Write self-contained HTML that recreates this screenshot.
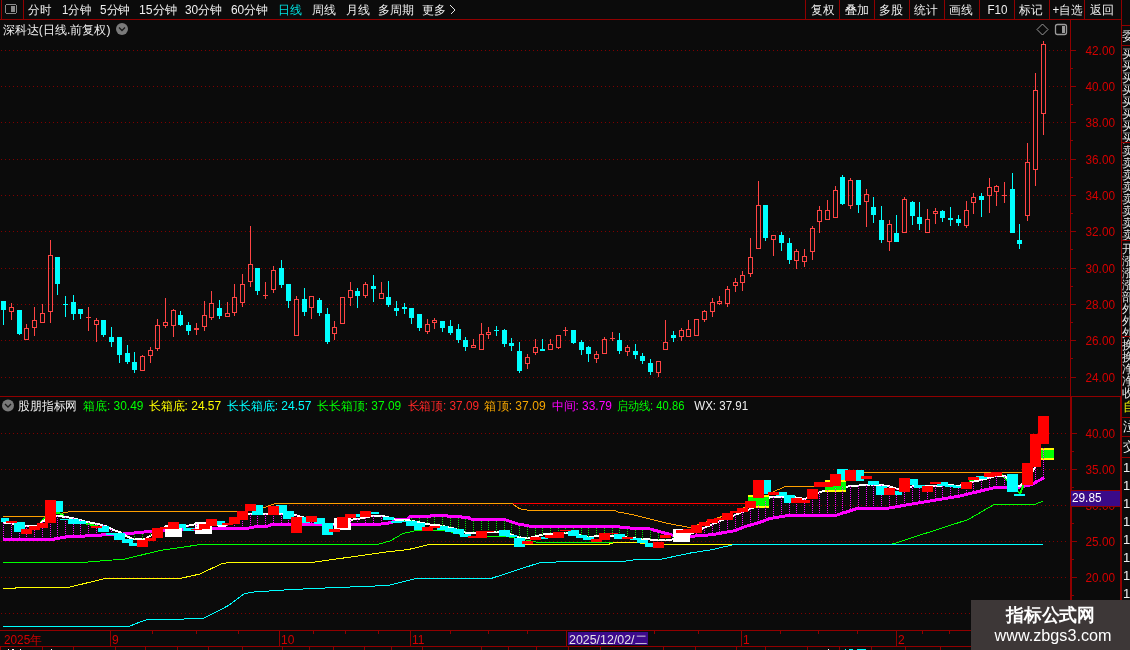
<!DOCTYPE html>
<html><head><meta charset="utf-8"><style>
html,body{margin:0;padding:0;background:#0b0b0b;width:1130px;height:650px;overflow:hidden}
svg{display:block;position:absolute;left:0;top:0;will-change:transform}
</style></head><body>
<svg width="1130" height="650" viewBox="0 0 1130 650" shape-rendering="crispEdges">
<rect x="0" y="0" width="1130" height="650" fill="#0b0b0b"/>
<path d="M1 50.5H1068" stroke="#800000" stroke-width="1" stroke-dasharray="1 3"/><path d="M1 86.5H1068" stroke="#800000" stroke-width="1" stroke-dasharray="1 3"/><path d="M1 122.5H1068" stroke="#800000" stroke-width="1" stroke-dasharray="1 3"/><path d="M1 159.5H1068" stroke="#800000" stroke-width="1" stroke-dasharray="1 3"/><path d="M1 195.5H1068" stroke="#800000" stroke-width="1" stroke-dasharray="1 3"/><path d="M1 231.5H1068" stroke="#800000" stroke-width="1" stroke-dasharray="1 3"/><path d="M1 268.5H1068" stroke="#800000" stroke-width="1" stroke-dasharray="1 3"/><path d="M1 304.5H1068" stroke="#800000" stroke-width="1" stroke-dasharray="1 3"/><path d="M1 340.5H1068" stroke="#800000" stroke-width="1" stroke-dasharray="1 3"/><path d="M1 377.5H1068" stroke="#800000" stroke-width="1" stroke-dasharray="1 3"/><path d="M1 433.5H1068" stroke="#800000" stroke-width="1" stroke-dasharray="1 3"/><path d="M1 469.5H1068" stroke="#800000" stroke-width="1" stroke-dasharray="1 3"/><path d="M1 505.5H1068" stroke="#800000" stroke-width="1" stroke-dasharray="1 3"/><path d="M1 541.5H1068" stroke="#800000" stroke-width="1" stroke-dasharray="1 3"/><path d="M1 577.5H1068" stroke="#800000" stroke-width="1" stroke-dasharray="1 3"/><path d="M1 613.5H1068" stroke="#800000" stroke-width="1" stroke-dasharray="1 3"/>
<rect x="3" y="310" width="1" height="15" fill="#00ffff"/><rect x="1" y="301" width="5" height="9" fill="#00ffff"/><rect x="11" y="303" width="1" height="4" fill="#ff4444"/><rect x="11" y="312" width="1" height="8" fill="#ff4444"/><rect x="9" y="307" width="5" height="1" fill="#ff4444"/><rect x="9" y="311" width="5" height="1" fill="#ff4444"/><rect x="9" y="307" width="1" height="5" fill="#ff4444"/><rect x="13" y="307" width="1" height="5" fill="#ff4444"/><rect x="19" y="334" width="1" height="1" fill="#00ffff"/><rect x="17" y="310" width="5" height="24" fill="#00ffff"/><rect x="26" y="324" width="1" height="4" fill="#ff4444"/><rect x="24" y="328" width="5" height="1" fill="#ff4444"/><rect x="24" y="339" width="5" height="1" fill="#ff4444"/><rect x="24" y="328" width="1" height="12" fill="#ff4444"/><rect x="28" y="328" width="1" height="12" fill="#ff4444"/><rect x="34" y="307" width="1" height="13" fill="#ff4444"/><rect x="34" y="328" width="1" height="8" fill="#ff4444"/><rect x="32" y="320" width="5" height="1" fill="#ff4444"/><rect x="32" y="327" width="5" height="1" fill="#ff4444"/><rect x="32" y="320" width="1" height="8" fill="#ff4444"/><rect x="36" y="320" width="1" height="8" fill="#ff4444"/><rect x="42" y="304" width="1" height="9" fill="#ff4444"/><rect x="40" y="313" width="5" height="1" fill="#ff4444"/><rect x="40" y="322" width="5" height="1" fill="#ff4444"/><rect x="40" y="313" width="1" height="10" fill="#ff4444"/><rect x="44" y="313" width="1" height="10" fill="#ff4444"/><rect x="50" y="240" width="1" height="15" fill="#ff4444"/><rect x="50" y="312" width="1" height="11" fill="#ff4444"/><rect x="48" y="255" width="5" height="1" fill="#ff4444"/><rect x="48" y="311" width="5" height="1" fill="#ff4444"/><rect x="48" y="255" width="1" height="57" fill="#ff4444"/><rect x="52" y="255" width="1" height="57" fill="#ff4444"/><rect x="57" y="284" width="1" height="11" fill="#00ffff"/><rect x="55" y="257" width="5" height="27" fill="#00ffff"/><rect x="65" y="296" width="1" height="8" fill="#00ffff"/><rect x="65" y="305" width="1" height="12" fill="#00ffff"/><rect x="63" y="304" width="5" height="1" fill="#00ffff"/><rect x="73" y="295" width="1" height="7" fill="#00ffff"/><rect x="73" y="314" width="1" height="6" fill="#00ffff"/><rect x="71" y="302" width="5" height="12" fill="#00ffff"/><rect x="80" y="314" width="1" height="5" fill="#00ffff"/><rect x="78" y="309" width="5" height="5" fill="#00ffff"/><rect x="88" y="307" width="1" height="10" fill="#ff4444"/><rect x="88" y="318" width="1" height="13" fill="#ff4444"/><rect x="86" y="317" width="5" height="1" fill="#ff4444"/><rect x="96" y="318" width="1" height="2" fill="#ff4444"/><rect x="96" y="325" width="1" height="17" fill="#ff4444"/><rect x="94" y="320" width="5" height="1" fill="#ff4444"/><rect x="94" y="324" width="5" height="1" fill="#ff4444"/><rect x="94" y="320" width="1" height="5" fill="#ff4444"/><rect x="98" y="320" width="1" height="5" fill="#ff4444"/><rect x="103" y="335" width="1" height="2" fill="#00ffff"/><rect x="101" y="320" width="5" height="15" fill="#00ffff"/><rect x="111" y="327" width="1" height="10" fill="#00ffff"/><rect x="111" y="342" width="1" height="5" fill="#00ffff"/><rect x="109" y="337" width="5" height="5" fill="#00ffff"/><rect x="119" y="355" width="1" height="8" fill="#00ffff"/><rect x="117" y="337" width="5" height="18" fill="#00ffff"/><rect x="127" y="345" width="1" height="8" fill="#00ffff"/><rect x="127" y="362" width="1" height="2" fill="#00ffff"/><rect x="125" y="353" width="5" height="9" fill="#00ffff"/><rect x="134" y="352" width="1" height="10" fill="#00ffff"/><rect x="134" y="370" width="1" height="3" fill="#00ffff"/><rect x="132" y="362" width="5" height="8" fill="#00ffff"/><rect x="142" y="355" width="1" height="1" fill="#ff4444"/><rect x="140" y="356" width="5" height="1" fill="#ff4444"/><rect x="140" y="370" width="5" height="1" fill="#ff4444"/><rect x="140" y="356" width="1" height="15" fill="#ff4444"/><rect x="144" y="356" width="1" height="15" fill="#ff4444"/><rect x="150" y="347" width="1" height="3" fill="#ff4444"/><rect x="150" y="356" width="1" height="7" fill="#ff4444"/><rect x="148" y="350" width="5" height="1" fill="#ff4444"/><rect x="148" y="355" width="5" height="1" fill="#ff4444"/><rect x="148" y="350" width="1" height="6" fill="#ff4444"/><rect x="152" y="350" width="1" height="6" fill="#ff4444"/><rect x="157" y="319" width="1" height="6" fill="#ff4444"/><rect x="157" y="349" width="1" height="2" fill="#ff4444"/><rect x="155" y="325" width="5" height="1" fill="#ff4444"/><rect x="155" y="348" width="5" height="1" fill="#ff4444"/><rect x="155" y="325" width="1" height="24" fill="#ff4444"/><rect x="159" y="325" width="1" height="24" fill="#ff4444"/><rect x="165" y="298" width="1" height="24" fill="#ff4444"/><rect x="165" y="326" width="1" height="2" fill="#ff4444"/><rect x="163" y="322" width="5" height="1" fill="#ff4444"/><rect x="163" y="325" width="5" height="1" fill="#ff4444"/><rect x="163" y="322" width="1" height="4" fill="#ff4444"/><rect x="167" y="322" width="1" height="4" fill="#ff4444"/><rect x="173" y="309" width="1" height="1" fill="#ff4444"/><rect x="173" y="326" width="1" height="11" fill="#ff4444"/><rect x="171" y="310" width="5" height="1" fill="#ff4444"/><rect x="171" y="325" width="5" height="1" fill="#ff4444"/><rect x="171" y="310" width="1" height="16" fill="#ff4444"/><rect x="175" y="310" width="1" height="16" fill="#ff4444"/><rect x="180" y="311" width="1" height="4" fill="#00ffff"/><rect x="180" y="325" width="1" height="1" fill="#00ffff"/><rect x="178" y="315" width="5" height="10" fill="#00ffff"/><rect x="188" y="322" width="1" height="3" fill="#00ffff"/><rect x="188" y="331" width="1" height="4" fill="#00ffff"/><rect x="186" y="325" width="5" height="6" fill="#00ffff"/><rect x="196" y="323" width="1" height="5" fill="#ff4444"/><rect x="196" y="330" width="1" height="5" fill="#ff4444"/><rect x="194" y="328" width="5" height="1" fill="#ff4444"/><rect x="194" y="329" width="5" height="1" fill="#ff4444"/><rect x="194" y="328" width="1" height="2" fill="#ff4444"/><rect x="198" y="328" width="1" height="2" fill="#ff4444"/><rect x="204" y="301" width="1" height="14" fill="#ff4444"/><rect x="204" y="327" width="1" height="4" fill="#ff4444"/><rect x="202" y="315" width="5" height="1" fill="#ff4444"/><rect x="202" y="326" width="5" height="1" fill="#ff4444"/><rect x="202" y="315" width="1" height="12" fill="#ff4444"/><rect x="206" y="315" width="1" height="12" fill="#ff4444"/><rect x="211" y="291" width="1" height="12" fill="#ff4444"/><rect x="211" y="318" width="1" height="2" fill="#ff4444"/><rect x="209" y="303" width="5" height="1" fill="#ff4444"/><rect x="209" y="317" width="5" height="1" fill="#ff4444"/><rect x="209" y="303" width="1" height="15" fill="#ff4444"/><rect x="213" y="303" width="1" height="15" fill="#ff4444"/><rect x="219" y="300" width="1" height="8" fill="#00ffff"/><rect x="219" y="316" width="1" height="3" fill="#00ffff"/><rect x="217" y="308" width="5" height="8" fill="#00ffff"/><rect x="227" y="302" width="1" height="11" fill="#ff4444"/><rect x="225" y="313" width="5" height="1" fill="#ff4444"/><rect x="225" y="316" width="5" height="1" fill="#ff4444"/><rect x="225" y="313" width="1" height="4" fill="#ff4444"/><rect x="229" y="313" width="1" height="4" fill="#ff4444"/><rect x="234" y="284" width="1" height="13" fill="#ff4444"/><rect x="234" y="313" width="1" height="3" fill="#ff4444"/><rect x="232" y="297" width="5" height="1" fill="#ff4444"/><rect x="232" y="312" width="5" height="1" fill="#ff4444"/><rect x="232" y="297" width="1" height="16" fill="#ff4444"/><rect x="236" y="297" width="1" height="16" fill="#ff4444"/><rect x="242" y="274" width="1" height="10" fill="#ff4444"/><rect x="242" y="303" width="1" height="4" fill="#ff4444"/><rect x="240" y="284" width="5" height="1" fill="#ff4444"/><rect x="240" y="302" width="5" height="1" fill="#ff4444"/><rect x="240" y="284" width="1" height="19" fill="#ff4444"/><rect x="244" y="284" width="1" height="19" fill="#ff4444"/><rect x="250" y="226" width="1" height="38" fill="#ff4444"/><rect x="250" y="282" width="1" height="5" fill="#ff4444"/><rect x="248" y="264" width="5" height="1" fill="#ff4444"/><rect x="248" y="281" width="5" height="1" fill="#ff4444"/><rect x="248" y="264" width="1" height="18" fill="#ff4444"/><rect x="252" y="264" width="1" height="18" fill="#ff4444"/><rect x="257" y="291" width="1" height="4" fill="#00ffff"/><rect x="255" y="268" width="5" height="23" fill="#00ffff"/><rect x="265" y="282" width="1" height="13" fill="#ff4444"/><rect x="265" y="296" width="1" height="3" fill="#ff4444"/><rect x="263" y="295" width="5" height="1" fill="#ff4444"/><rect x="273" y="266" width="1" height="4" fill="#ff4444"/><rect x="273" y="290" width="1" height="3" fill="#ff4444"/><rect x="271" y="270" width="5" height="1" fill="#ff4444"/><rect x="271" y="289" width="5" height="1" fill="#ff4444"/><rect x="271" y="270" width="1" height="20" fill="#ff4444"/><rect x="275" y="270" width="1" height="20" fill="#ff4444"/><rect x="281" y="260" width="1" height="8" fill="#00ffff"/><rect x="281" y="285" width="1" height="3" fill="#00ffff"/><rect x="279" y="268" width="5" height="17" fill="#00ffff"/><rect x="288" y="301" width="1" height="7" fill="#00ffff"/><rect x="286" y="284" width="5" height="17" fill="#00ffff"/><rect x="296" y="296" width="1" height="3" fill="#ff4444"/><rect x="294" y="299" width="5" height="1" fill="#ff4444"/><rect x="294" y="335" width="5" height="1" fill="#ff4444"/><rect x="294" y="299" width="1" height="37" fill="#ff4444"/><rect x="298" y="299" width="1" height="37" fill="#ff4444"/><rect x="304" y="288" width="1" height="11" fill="#00ffff"/><rect x="304" y="312" width="1" height="4" fill="#00ffff"/><rect x="302" y="299" width="5" height="13" fill="#00ffff"/><rect x="311" y="308" width="1" height="11" fill="#ff4444"/><rect x="309" y="296" width="5" height="1" fill="#ff4444"/><rect x="309" y="307" width="5" height="1" fill="#ff4444"/><rect x="309" y="296" width="1" height="12" fill="#ff4444"/><rect x="313" y="296" width="1" height="12" fill="#ff4444"/><rect x="319" y="298" width="1" height="2" fill="#00ffff"/><rect x="319" y="313" width="1" height="3" fill="#00ffff"/><rect x="317" y="300" width="5" height="13" fill="#00ffff"/><rect x="327" y="308" width="1" height="6" fill="#00ffff"/><rect x="327" y="342" width="1" height="2" fill="#00ffff"/><rect x="325" y="314" width="5" height="28" fill="#00ffff"/><rect x="334" y="321" width="1" height="6" fill="#ff4444"/><rect x="334" y="334" width="1" height="6" fill="#ff4444"/><rect x="332" y="327" width="5" height="1" fill="#ff4444"/><rect x="332" y="333" width="5" height="1" fill="#ff4444"/><rect x="332" y="327" width="1" height="7" fill="#ff4444"/><rect x="336" y="327" width="1" height="7" fill="#ff4444"/><rect x="340" y="297" width="5" height="1" fill="#ff4444"/><rect x="340" y="323" width="5" height="1" fill="#ff4444"/><rect x="340" y="297" width="1" height="27" fill="#ff4444"/><rect x="344" y="297" width="1" height="27" fill="#ff4444"/><rect x="350" y="282" width="1" height="8" fill="#ff4444"/><rect x="350" y="298" width="1" height="8" fill="#ff4444"/><rect x="348" y="290" width="5" height="1" fill="#ff4444"/><rect x="348" y="297" width="5" height="1" fill="#ff4444"/><rect x="348" y="290" width="1" height="8" fill="#ff4444"/><rect x="352" y="290" width="1" height="8" fill="#ff4444"/><rect x="357" y="288" width="1" height="3" fill="#00ffff"/><rect x="357" y="296" width="1" height="12" fill="#00ffff"/><rect x="355" y="291" width="5" height="5" fill="#00ffff"/><rect x="365" y="282" width="1" height="2" fill="#ff4444"/><rect x="365" y="296" width="1" height="2" fill="#ff4444"/><rect x="363" y="284" width="5" height="1" fill="#ff4444"/><rect x="363" y="295" width="5" height="1" fill="#ff4444"/><rect x="363" y="284" width="1" height="12" fill="#ff4444"/><rect x="367" y="284" width="1" height="12" fill="#ff4444"/><rect x="373" y="275" width="1" height="11" fill="#00ffff"/><rect x="373" y="289" width="1" height="13" fill="#00ffff"/><rect x="371" y="286" width="5" height="3" fill="#00ffff"/><rect x="381" y="282" width="1" height="11" fill="#ff4444"/><rect x="379" y="293" width="5" height="1" fill="#ff4444"/><rect x="379" y="298" width="5" height="1" fill="#ff4444"/><rect x="379" y="293" width="1" height="6" fill="#ff4444"/><rect x="383" y="293" width="1" height="6" fill="#ff4444"/><rect x="388" y="281" width="1" height="16" fill="#00ffff"/><rect x="388" y="305" width="1" height="2" fill="#00ffff"/><rect x="386" y="297" width="5" height="8" fill="#00ffff"/><rect x="396" y="301" width="1" height="7" fill="#00ffff"/><rect x="396" y="311" width="1" height="5" fill="#00ffff"/><rect x="394" y="308" width="5" height="3" fill="#00ffff"/><rect x="404" y="303" width="1" height="4" fill="#00ffff"/><rect x="404" y="309" width="1" height="5" fill="#00ffff"/><rect x="402" y="307" width="5" height="2" fill="#00ffff"/><rect x="411" y="318" width="1" height="6" fill="#00ffff"/><rect x="409" y="308" width="5" height="10" fill="#00ffff"/><rect x="419" y="328" width="1" height="3" fill="#00ffff"/><rect x="417" y="314" width="5" height="14" fill="#00ffff"/><rect x="427" y="319" width="1" height="5" fill="#ff4444"/><rect x="427" y="332" width="1" height="2" fill="#ff4444"/><rect x="425" y="324" width="5" height="1" fill="#ff4444"/><rect x="425" y="331" width="5" height="1" fill="#ff4444"/><rect x="425" y="324" width="1" height="8" fill="#ff4444"/><rect x="429" y="324" width="1" height="8" fill="#ff4444"/><rect x="434" y="318" width="1" height="2" fill="#ff4444"/><rect x="434" y="323" width="1" height="6" fill="#ff4444"/><rect x="432" y="320" width="5" height="1" fill="#ff4444"/><rect x="432" y="322" width="5" height="1" fill="#ff4444"/><rect x="432" y="320" width="1" height="3" fill="#ff4444"/><rect x="436" y="320" width="1" height="3" fill="#ff4444"/><rect x="442" y="328" width="1" height="4" fill="#00ffff"/><rect x="440" y="321" width="5" height="7" fill="#00ffff"/><rect x="450" y="320" width="1" height="6" fill="#00ffff"/><rect x="450" y="333" width="1" height="2" fill="#00ffff"/><rect x="448" y="326" width="5" height="7" fill="#00ffff"/><rect x="458" y="324" width="1" height="5" fill="#00ffff"/><rect x="458" y="340" width="1" height="3" fill="#00ffff"/><rect x="456" y="329" width="5" height="11" fill="#00ffff"/><rect x="465" y="337" width="1" height="3" fill="#00ffff"/><rect x="465" y="347" width="1" height="4" fill="#00ffff"/><rect x="463" y="340" width="5" height="7" fill="#00ffff"/><rect x="473" y="339" width="1" height="6" fill="#ff4444"/><rect x="471" y="345" width="5" height="1" fill="#ff4444"/><rect x="471" y="347" width="5" height="1" fill="#ff4444"/><rect x="471" y="345" width="1" height="3" fill="#ff4444"/><rect x="475" y="345" width="1" height="3" fill="#ff4444"/><rect x="481" y="323" width="1" height="11" fill="#ff4444"/><rect x="479" y="334" width="5" height="1" fill="#ff4444"/><rect x="479" y="349" width="5" height="1" fill="#ff4444"/><rect x="479" y="334" width="1" height="16" fill="#ff4444"/><rect x="483" y="334" width="1" height="16" fill="#ff4444"/><rect x="488" y="327" width="1" height="5" fill="#ff4444"/><rect x="488" y="335" width="1" height="4" fill="#ff4444"/><rect x="486" y="332" width="5" height="1" fill="#ff4444"/><rect x="486" y="334" width="5" height="1" fill="#ff4444"/><rect x="486" y="332" width="1" height="3" fill="#ff4444"/><rect x="490" y="332" width="1" height="3" fill="#ff4444"/><rect x="496" y="326" width="1" height="4" fill="#00ffff"/><rect x="496" y="331" width="1" height="5" fill="#00ffff"/><rect x="494" y="330" width="5" height="1" fill="#00ffff"/><rect x="504" y="329" width="1" height="1" fill="#00ffff"/><rect x="504" y="344" width="1" height="3" fill="#00ffff"/><rect x="502" y="330" width="5" height="14" fill="#00ffff"/><rect x="511" y="338" width="1" height="5" fill="#00ffff"/><rect x="511" y="346" width="1" height="5" fill="#00ffff"/><rect x="509" y="343" width="5" height="3" fill="#00ffff"/><rect x="519" y="342" width="1" height="9" fill="#00ffff"/><rect x="519" y="371" width="1" height="2" fill="#00ffff"/><rect x="517" y="351" width="5" height="20" fill="#00ffff"/><rect x="527" y="354" width="1" height="3" fill="#ff4444"/><rect x="527" y="364" width="1" height="5" fill="#ff4444"/><rect x="525" y="357" width="5" height="1" fill="#ff4444"/><rect x="525" y="363" width="5" height="1" fill="#ff4444"/><rect x="525" y="357" width="1" height="7" fill="#ff4444"/><rect x="529" y="357" width="1" height="7" fill="#ff4444"/><rect x="535" y="339" width="1" height="8" fill="#ff4444"/><rect x="535" y="353" width="1" height="2" fill="#ff4444"/><rect x="533" y="347" width="5" height="1" fill="#ff4444"/><rect x="533" y="352" width="5" height="1" fill="#ff4444"/><rect x="533" y="347" width="1" height="6" fill="#ff4444"/><rect x="537" y="347" width="1" height="6" fill="#ff4444"/><rect x="542" y="339" width="1" height="10" fill="#00ffff"/><rect x="540" y="349" width="5" height="2" fill="#00ffff"/><rect x="550" y="339" width="1" height="5" fill="#ff4444"/><rect x="548" y="344" width="5" height="1" fill="#ff4444"/><rect x="548" y="349" width="5" height="1" fill="#ff4444"/><rect x="548" y="344" width="1" height="6" fill="#ff4444"/><rect x="552" y="344" width="1" height="6" fill="#ff4444"/><rect x="558" y="348" width="1" height="1" fill="#ff4444"/><rect x="556" y="335" width="5" height="1" fill="#ff4444"/><rect x="556" y="347" width="5" height="1" fill="#ff4444"/><rect x="556" y="335" width="1" height="13" fill="#ff4444"/><rect x="560" y="335" width="1" height="13" fill="#ff4444"/><rect x="565" y="327" width="1" height="3" fill="#ff4444"/><rect x="565" y="331" width="1" height="5" fill="#ff4444"/><rect x="563" y="330" width="5" height="1" fill="#ff4444"/><rect x="573" y="343" width="1" height="1" fill="#00ffff"/><rect x="571" y="330" width="5" height="13" fill="#00ffff"/><rect x="581" y="340" width="1" height="2" fill="#00ffff"/><rect x="581" y="350" width="1" height="5" fill="#00ffff"/><rect x="579" y="342" width="5" height="8" fill="#00ffff"/><rect x="588" y="346" width="1" height="1" fill="#00ffff"/><rect x="588" y="354" width="1" height="8" fill="#00ffff"/><rect x="586" y="347" width="5" height="7" fill="#00ffff"/><rect x="596" y="351" width="1" height="3" fill="#ff4444"/><rect x="596" y="359" width="1" height="4" fill="#ff4444"/><rect x="594" y="354" width="5" height="1" fill="#ff4444"/><rect x="594" y="358" width="5" height="1" fill="#ff4444"/><rect x="594" y="354" width="1" height="5" fill="#ff4444"/><rect x="598" y="354" width="1" height="5" fill="#ff4444"/><rect x="604" y="337" width="1" height="2" fill="#ff4444"/><rect x="602" y="339" width="5" height="1" fill="#ff4444"/><rect x="602" y="353" width="5" height="1" fill="#ff4444"/><rect x="602" y="339" width="1" height="15" fill="#ff4444"/><rect x="606" y="339" width="1" height="15" fill="#ff4444"/><rect x="612" y="332" width="1" height="6" fill="#ff4444"/><rect x="612" y="339" width="1" height="2" fill="#ff4444"/><rect x="610" y="338" width="5" height="1" fill="#ff4444"/><rect x="619" y="333" width="1" height="7" fill="#00ffff"/><rect x="619" y="351" width="1" height="3" fill="#00ffff"/><rect x="617" y="340" width="5" height="11" fill="#00ffff"/><rect x="627" y="345" width="1" height="2" fill="#ff4444"/><rect x="627" y="352" width="1" height="4" fill="#ff4444"/><rect x="625" y="347" width="5" height="1" fill="#ff4444"/><rect x="625" y="351" width="5" height="1" fill="#ff4444"/><rect x="625" y="347" width="1" height="5" fill="#ff4444"/><rect x="629" y="347" width="1" height="5" fill="#ff4444"/><rect x="635" y="344" width="1" height="7" fill="#00ffff"/><rect x="635" y="355" width="1" height="4" fill="#00ffff"/><rect x="633" y="351" width="5" height="4" fill="#00ffff"/><rect x="642" y="353" width="1" height="3" fill="#00ffff"/><rect x="642" y="361" width="1" height="3" fill="#00ffff"/><rect x="640" y="356" width="5" height="5" fill="#00ffff"/><rect x="650" y="359" width="1" height="4" fill="#00ffff"/><rect x="650" y="372" width="1" height="3" fill="#00ffff"/><rect x="648" y="363" width="5" height="9" fill="#00ffff"/><rect x="658" y="373" width="1" height="4" fill="#ff4444"/><rect x="656" y="361" width="5" height="1" fill="#ff4444"/><rect x="656" y="372" width="5" height="1" fill="#ff4444"/><rect x="656" y="361" width="1" height="12" fill="#ff4444"/><rect x="660" y="361" width="1" height="12" fill="#ff4444"/><rect x="665" y="320" width="1" height="22" fill="#ff4444"/><rect x="663" y="342" width="5" height="1" fill="#ff4444"/><rect x="663" y="349" width="5" height="1" fill="#ff4444"/><rect x="663" y="342" width="1" height="8" fill="#ff4444"/><rect x="667" y="342" width="1" height="8" fill="#ff4444"/><rect x="673" y="331" width="1" height="4" fill="#00ffff"/><rect x="673" y="338" width="1" height="4" fill="#00ffff"/><rect x="671" y="335" width="5" height="3" fill="#00ffff"/><rect x="681" y="328" width="1" height="2" fill="#ff4444"/><rect x="681" y="337" width="1" height="4" fill="#ff4444"/><rect x="679" y="330" width="5" height="1" fill="#ff4444"/><rect x="679" y="336" width="5" height="1" fill="#ff4444"/><rect x="679" y="330" width="1" height="7" fill="#ff4444"/><rect x="683" y="330" width="1" height="7" fill="#ff4444"/><rect x="688" y="320" width="1" height="9" fill="#ff4444"/><rect x="686" y="329" width="5" height="1" fill="#ff4444"/><rect x="686" y="336" width="5" height="1" fill="#ff4444"/><rect x="686" y="329" width="1" height="8" fill="#ff4444"/><rect x="690" y="329" width="1" height="8" fill="#ff4444"/><rect x="694" y="319" width="5" height="1" fill="#ff4444"/><rect x="694" y="335" width="5" height="1" fill="#ff4444"/><rect x="694" y="319" width="1" height="17" fill="#ff4444"/><rect x="698" y="319" width="1" height="17" fill="#ff4444"/><rect x="704" y="310" width="1" height="1" fill="#ff4444"/><rect x="704" y="320" width="1" height="2" fill="#ff4444"/><rect x="702" y="311" width="5" height="1" fill="#ff4444"/><rect x="702" y="319" width="5" height="1" fill="#ff4444"/><rect x="702" y="311" width="1" height="9" fill="#ff4444"/><rect x="706" y="311" width="1" height="9" fill="#ff4444"/><rect x="712" y="298" width="1" height="4" fill="#ff4444"/><rect x="712" y="312" width="1" height="5" fill="#ff4444"/><rect x="710" y="302" width="5" height="1" fill="#ff4444"/><rect x="710" y="311" width="5" height="1" fill="#ff4444"/><rect x="710" y="302" width="1" height="10" fill="#ff4444"/><rect x="714" y="302" width="1" height="10" fill="#ff4444"/><rect x="719" y="296" width="1" height="5" fill="#ff4444"/><rect x="719" y="304" width="1" height="1" fill="#ff4444"/><rect x="717" y="301" width="5" height="1" fill="#ff4444"/><rect x="717" y="303" width="5" height="1" fill="#ff4444"/><rect x="717" y="301" width="1" height="3" fill="#ff4444"/><rect x="721" y="301" width="1" height="3" fill="#ff4444"/><rect x="727" y="286" width="1" height="3" fill="#ff4444"/><rect x="727" y="304" width="1" height="3" fill="#ff4444"/><rect x="725" y="289" width="5" height="1" fill="#ff4444"/><rect x="725" y="303" width="5" height="1" fill="#ff4444"/><rect x="725" y="289" width="1" height="15" fill="#ff4444"/><rect x="729" y="289" width="1" height="15" fill="#ff4444"/><rect x="735" y="278" width="1" height="4" fill="#ff4444"/><rect x="735" y="286" width="1" height="6" fill="#ff4444"/><rect x="733" y="282" width="5" height="1" fill="#ff4444"/><rect x="733" y="285" width="5" height="1" fill="#ff4444"/><rect x="733" y="282" width="1" height="4" fill="#ff4444"/><rect x="737" y="282" width="1" height="4" fill="#ff4444"/><rect x="742" y="271" width="1" height="4" fill="#ff4444"/><rect x="742" y="283" width="1" height="8" fill="#ff4444"/><rect x="740" y="275" width="5" height="1" fill="#ff4444"/><rect x="740" y="282" width="5" height="1" fill="#ff4444"/><rect x="740" y="275" width="1" height="8" fill="#ff4444"/><rect x="744" y="275" width="1" height="8" fill="#ff4444"/><rect x="750" y="238" width="1" height="19" fill="#ff4444"/><rect x="750" y="274" width="1" height="3" fill="#ff4444"/><rect x="748" y="257" width="5" height="1" fill="#ff4444"/><rect x="748" y="273" width="5" height="1" fill="#ff4444"/><rect x="748" y="257" width="1" height="17" fill="#ff4444"/><rect x="752" y="257" width="1" height="17" fill="#ff4444"/><rect x="758" y="181" width="1" height="24" fill="#ff4444"/><rect x="756" y="205" width="5" height="1" fill="#ff4444"/><rect x="756" y="248" width="5" height="1" fill="#ff4444"/><rect x="756" y="205" width="1" height="44" fill="#ff4444"/><rect x="760" y="205" width="1" height="44" fill="#ff4444"/><rect x="765" y="238" width="1" height="3" fill="#00ffff"/><rect x="763" y="205" width="5" height="33" fill="#00ffff"/><rect x="773" y="240" width="1" height="16" fill="#ff4444"/><rect x="771" y="235" width="5" height="1" fill="#ff4444"/><rect x="771" y="239" width="5" height="1" fill="#ff4444"/><rect x="771" y="235" width="1" height="5" fill="#ff4444"/><rect x="775" y="235" width="1" height="5" fill="#ff4444"/><rect x="781" y="232" width="1" height="3" fill="#00ffff"/><rect x="781" y="243" width="1" height="8" fill="#00ffff"/><rect x="779" y="235" width="5" height="8" fill="#00ffff"/><rect x="789" y="238" width="1" height="5" fill="#00ffff"/><rect x="789" y="260" width="1" height="4" fill="#00ffff"/><rect x="787" y="243" width="5" height="17" fill="#00ffff"/><rect x="796" y="249" width="1" height="2" fill="#ff4444"/><rect x="796" y="261" width="1" height="8" fill="#ff4444"/><rect x="794" y="251" width="5" height="1" fill="#ff4444"/><rect x="794" y="260" width="5" height="1" fill="#ff4444"/><rect x="794" y="251" width="1" height="10" fill="#ff4444"/><rect x="798" y="251" width="1" height="10" fill="#ff4444"/><rect x="804" y="249" width="1" height="7" fill="#ff4444"/><rect x="804" y="262" width="1" height="5" fill="#ff4444"/><rect x="802" y="256" width="5" height="1" fill="#ff4444"/><rect x="802" y="261" width="5" height="1" fill="#ff4444"/><rect x="802" y="256" width="1" height="6" fill="#ff4444"/><rect x="806" y="256" width="1" height="6" fill="#ff4444"/><rect x="812" y="226" width="1" height="2" fill="#ff4444"/><rect x="812" y="252" width="1" height="8" fill="#ff4444"/><rect x="810" y="228" width="5" height="1" fill="#ff4444"/><rect x="810" y="251" width="5" height="1" fill="#ff4444"/><rect x="810" y="228" width="1" height="24" fill="#ff4444"/><rect x="814" y="228" width="1" height="24" fill="#ff4444"/><rect x="819" y="206" width="1" height="4" fill="#ff4444"/><rect x="819" y="222" width="1" height="11" fill="#ff4444"/><rect x="817" y="210" width="5" height="1" fill="#ff4444"/><rect x="817" y="221" width="5" height="1" fill="#ff4444"/><rect x="817" y="210" width="1" height="12" fill="#ff4444"/><rect x="821" y="210" width="1" height="12" fill="#ff4444"/><rect x="827" y="200" width="1" height="10" fill="#ff4444"/><rect x="825" y="210" width="5" height="1" fill="#ff4444"/><rect x="825" y="219" width="5" height="1" fill="#ff4444"/><rect x="825" y="210" width="1" height="10" fill="#ff4444"/><rect x="829" y="210" width="1" height="10" fill="#ff4444"/><rect x="835" y="186" width="1" height="4" fill="#ff4444"/><rect x="833" y="190" width="5" height="1" fill="#ff4444"/><rect x="833" y="217" width="5" height="1" fill="#ff4444"/><rect x="833" y="190" width="1" height="28" fill="#ff4444"/><rect x="837" y="190" width="1" height="28" fill="#ff4444"/><rect x="842" y="175" width="1" height="2" fill="#00ffff"/><rect x="842" y="204" width="1" height="1" fill="#00ffff"/><rect x="840" y="177" width="5" height="27" fill="#00ffff"/><rect x="850" y="178" width="1" height="2" fill="#ff4444"/><rect x="850" y="206" width="1" height="3" fill="#ff4444"/><rect x="848" y="180" width="5" height="1" fill="#ff4444"/><rect x="848" y="205" width="5" height="1" fill="#ff4444"/><rect x="848" y="180" width="1" height="26" fill="#ff4444"/><rect x="852" y="180" width="1" height="26" fill="#ff4444"/><rect x="858" y="205" width="1" height="8" fill="#00ffff"/><rect x="856" y="180" width="5" height="25" fill="#00ffff"/><rect x="866" y="189" width="1" height="5" fill="#ff4444"/><rect x="866" y="202" width="1" height="25" fill="#ff4444"/><rect x="864" y="194" width="5" height="1" fill="#ff4444"/><rect x="864" y="201" width="5" height="1" fill="#ff4444"/><rect x="864" y="194" width="1" height="8" fill="#ff4444"/><rect x="868" y="194" width="1" height="8" fill="#ff4444"/><rect x="873" y="197" width="1" height="10" fill="#00ffff"/><rect x="873" y="215" width="1" height="8" fill="#00ffff"/><rect x="871" y="207" width="5" height="8" fill="#00ffff"/><rect x="881" y="206" width="1" height="14" fill="#00ffff"/><rect x="881" y="240" width="1" height="3" fill="#00ffff"/><rect x="879" y="220" width="5" height="20" fill="#00ffff"/><rect x="889" y="220" width="1" height="4" fill="#ff4444"/><rect x="889" y="242" width="1" height="9" fill="#ff4444"/><rect x="887" y="224" width="5" height="1" fill="#ff4444"/><rect x="887" y="241" width="5" height="1" fill="#ff4444"/><rect x="887" y="224" width="1" height="18" fill="#ff4444"/><rect x="891" y="224" width="1" height="18" fill="#ff4444"/><rect x="896" y="215" width="1" height="18" fill="#00ffff"/><rect x="894" y="233" width="5" height="9" fill="#00ffff"/><rect x="904" y="197" width="1" height="2" fill="#ff4444"/><rect x="902" y="199" width="5" height="1" fill="#ff4444"/><rect x="902" y="232" width="5" height="1" fill="#ff4444"/><rect x="902" y="199" width="1" height="34" fill="#ff4444"/><rect x="906" y="199" width="1" height="34" fill="#ff4444"/><rect x="912" y="201" width="1" height="1" fill="#00ffff"/><rect x="912" y="216" width="1" height="9" fill="#00ffff"/><rect x="910" y="202" width="5" height="14" fill="#00ffff"/><rect x="919" y="202" width="1" height="15" fill="#00ffff"/><rect x="919" y="224" width="1" height="6" fill="#00ffff"/><rect x="917" y="217" width="5" height="7" fill="#00ffff"/><rect x="927" y="209" width="1" height="10" fill="#ff4444"/><rect x="925" y="219" width="5" height="1" fill="#ff4444"/><rect x="925" y="232" width="5" height="1" fill="#ff4444"/><rect x="925" y="219" width="1" height="14" fill="#ff4444"/><rect x="929" y="219" width="1" height="14" fill="#ff4444"/><rect x="935" y="208" width="1" height="3" fill="#ff4444"/><rect x="935" y="214" width="1" height="10" fill="#ff4444"/><rect x="933" y="211" width="5" height="1" fill="#ff4444"/><rect x="933" y="213" width="5" height="1" fill="#ff4444"/><rect x="933" y="211" width="1" height="3" fill="#ff4444"/><rect x="937" y="211" width="1" height="3" fill="#ff4444"/><rect x="942" y="210" width="1" height="1" fill="#00ffff"/><rect x="942" y="218" width="1" height="4" fill="#00ffff"/><rect x="940" y="211" width="5" height="7" fill="#00ffff"/><rect x="950" y="207" width="1" height="11" fill="#00ffff"/><rect x="950" y="220" width="1" height="6" fill="#00ffff"/><rect x="948" y="218" width="5" height="2" fill="#00ffff"/><rect x="958" y="215" width="1" height="4" fill="#00ffff"/><rect x="958" y="223" width="1" height="3" fill="#00ffff"/><rect x="956" y="219" width="5" height="4" fill="#00ffff"/><rect x="966" y="201" width="1" height="9" fill="#ff4444"/><rect x="966" y="226" width="1" height="2" fill="#ff4444"/><rect x="964" y="210" width="5" height="1" fill="#ff4444"/><rect x="964" y="225" width="5" height="1" fill="#ff4444"/><rect x="964" y="210" width="1" height="16" fill="#ff4444"/><rect x="968" y="210" width="1" height="16" fill="#ff4444"/><rect x="973" y="193" width="1" height="4" fill="#ff4444"/><rect x="973" y="203" width="1" height="11" fill="#ff4444"/><rect x="971" y="197" width="5" height="1" fill="#ff4444"/><rect x="971" y="202" width="5" height="1" fill="#ff4444"/><rect x="971" y="197" width="1" height="6" fill="#ff4444"/><rect x="975" y="197" width="1" height="6" fill="#ff4444"/><rect x="981" y="193" width="1" height="3" fill="#00ffff"/><rect x="981" y="200" width="1" height="17" fill="#00ffff"/><rect x="979" y="196" width="5" height="4" fill="#00ffff"/><rect x="989" y="178" width="1" height="9" fill="#ff4444"/><rect x="989" y="196" width="1" height="17" fill="#ff4444"/><rect x="987" y="187" width="5" height="1" fill="#ff4444"/><rect x="987" y="195" width="5" height="1" fill="#ff4444"/><rect x="987" y="187" width="1" height="9" fill="#ff4444"/><rect x="991" y="187" width="1" height="9" fill="#ff4444"/><rect x="996" y="185" width="1" height="1" fill="#ff4444"/><rect x="996" y="192" width="1" height="14" fill="#ff4444"/><rect x="994" y="186" width="5" height="1" fill="#ff4444"/><rect x="994" y="191" width="5" height="1" fill="#ff4444"/><rect x="994" y="186" width="1" height="6" fill="#ff4444"/><rect x="998" y="186" width="1" height="6" fill="#ff4444"/><rect x="1004" y="182" width="1" height="13" fill="#ff4444"/><rect x="1004" y="196" width="1" height="7" fill="#ff4444"/><rect x="1002" y="195" width="5" height="1" fill="#ff4444"/><rect x="1012" y="173" width="1" height="16" fill="#00ffff"/><rect x="1010" y="189" width="5" height="44" fill="#00ffff"/><rect x="1019" y="224" width="1" height="16" fill="#00ffff"/><rect x="1019" y="244" width="1" height="5" fill="#00ffff"/><rect x="1017" y="240" width="5" height="4" fill="#00ffff"/><rect x="1027" y="143" width="1" height="19" fill="#ff4444"/><rect x="1027" y="216" width="1" height="5" fill="#ff4444"/><rect x="1025" y="162" width="5" height="1" fill="#ff4444"/><rect x="1025" y="215" width="5" height="1" fill="#ff4444"/><rect x="1025" y="162" width="1" height="54" fill="#ff4444"/><rect x="1029" y="162" width="1" height="54" fill="#ff4444"/><rect x="1035" y="73" width="1" height="17" fill="#ff4444"/><rect x="1035" y="170" width="1" height="16" fill="#ff4444"/><rect x="1033" y="90" width="5" height="1" fill="#ff4444"/><rect x="1033" y="169" width="5" height="1" fill="#ff4444"/><rect x="1033" y="90" width="1" height="80" fill="#ff4444"/><rect x="1037" y="90" width="1" height="80" fill="#ff4444"/><rect x="1043" y="41" width="1" height="3" fill="#ff4444"/><rect x="1043" y="114" width="1" height="21" fill="#ff4444"/><rect x="1041" y="44" width="5" height="1" fill="#ff4444"/><rect x="1041" y="113" width="5" height="1" fill="#ff4444"/><rect x="1041" y="44" width="1" height="70" fill="#ff4444"/><rect x="1045" y="44" width="1" height="70" fill="#ff4444"/>
<path d="M3.0 562.4 L83.0 562.4 L125.0 559.0 L160.0 550.5 L200.0 544.6 L377.0 544.6 L390.0 541.0 L403.0 533.5 L415.0 530.8 L445.0 530.5 L468.0 536.3 L505.0 536.3 L533.0 541.3 L539.0 542.6 L608.0 542.6 L615.0 542.3 L637.0 542.3 L650.0 544.5 L891.0 544.5 L968.0 519.6 L995.0 504.0 L1036.0 504.0 L1043.0 501.0" stroke="#00ff00" stroke-width="1" fill="none" stroke-linejoin="round"/><path d="M3.0 588.5 L15.0 588.5 L16.0 587.3 L69.0 587.3 L107.0 578.0 L182.0 578.0 L200.0 574.0 L221.0 564.0 L232.0 562.0 L315.0 562.0 L390.0 551.5 L408.0 549.6 L430.0 544.4 L608.0 544.4 L615.0 542.6 L637.0 542.6 L650.0 544.5 L1043.0 544.5" stroke="#ffff00" stroke-width="1" fill="none" stroke-linejoin="round"/><path d="M3.0 626.4 L129.0 626.4 L140.0 622.0 L149.0 619.0 L184.0 619.0 L203.0 618.5 L228.0 605.8 L244.0 593.8 L254.0 592.0 L290.0 589.6 L330.0 587.8 L375.0 586.0 L390.0 585.0 L415.0 578.8 L490.0 578.8 L540.0 562.6 L570.0 561.5 L623.0 561.5 L640.0 559.0 L662.0 559.0 L692.0 552.7 L712.0 549.7 L734.0 544.5 L1043.0 544.5" stroke="#00ffff" stroke-width="1" fill="none" stroke-linejoin="round"/><path d="M512.0 503.4 L745.0 503.4" stroke="#ff0000" stroke-width="1" fill="none" stroke-linejoin="round"/><path d="M3.0 516.5 L45.0 516.5 L56.0 514.0 L63.0 513.0 L71.0 511.5 L244.0 511.4 L256.0 509.0 L265.0 507.4 L270.0 505.4 L275.0 503.8 L277.0 503.4 L512.0 503.4 L519.0 508.4 L524.0 509.8 L532.0 510.3 L614.0 510.3 L618.0 512.0 L624.0 513.0 L632.0 514.5 L650.0 519.0 L668.0 523.5 L690.0 527.5 L735.0 512.0 L760.0 500.0 L775.0 491.0 L786.0 486.3 L815.0 486.3 L840.0 478.0 L864.0 472.5 L1022.0 472.5" stroke="#ffa000" stroke-width="1" fill="none" stroke-linejoin="round"/><path d="M3.0 539.3 L53.0 539.3 L67.7 536.7 L99.6 535.4 L106.6 534.0 L123.5 534.0 L150.0 531.4 L190.0 529.5 L211.0 528.5 L247.0 528.5 L254.0 527.0 L268.0 526.0 L271.6 524.5 L378.0 524.4 L391.0 522.8 L396.0 519.5 L407.0 519.5 L410.0 516.6 L430.0 516.6 L431.0 515.2 L447.0 515.2 L448.0 516.6 L461.0 516.6 L462.0 517.8 L469.0 517.8 L470.0 519.0 L506.0 520.0 L518.0 524.0 L532.0 526.5 L615.0 526.5 L630.0 528.0 L650.0 529.0 L672.0 535.0 L690.0 536.4 L712.0 534.7 L735.0 530.6 L745.0 526.6 L760.0 522.3 L770.0 518.5 L785.0 516.0 L836.0 515.4 L857.0 508.5 L890.0 508.0 L906.0 505.0 L960.0 496.0 L995.0 487.5 L1007.0 487.5 L1020.0 487.0 L1031.0 484.8 L1040.0 480.0 L1044.0 477.5" stroke="#ff00ff" stroke-width="3" fill="none" stroke-linejoin="round"/><path d="M1001.0 474.0 L1007.0 480.0 L1012.0 486.0 L1019.0 492.5 L1020.5 492.5 L1023.5 485.0 L1026.0 481.0" stroke="#00ff00" stroke-width="2" fill="none" stroke-linejoin="round"/><path d="M40.0 523.5 L45.0 518.0 L50.0 514.0 L58.0 512.5 L64.0 515.5" stroke="#00ff00" stroke-width="2" fill="none" stroke-linejoin="round"/><path d="M86.0 523.5 L98.0 526.5" stroke="#00ff00" stroke-width="2" fill="none" stroke-linejoin="round"/><path d="M969.0 481.5 L974.0 480.5" stroke="#00ff00" stroke-width="2" fill="none" stroke-linejoin="round"/><path d="M979.0 480.0 L982.0 479.0" stroke="#00ff00" stroke-width="2" fill="none" stroke-linejoin="round"/><path d="M3.0 523.0 L12.0 523.5 L25.0 525.5 L37.0 525.5 L45.0 520.0 L56.0 515.5 L72.0 518.0 L87.0 522.0 L98.0 524.0 L106.6 526.5 L113.7 530.0 L120.0 532.3 L127.0 536.3 L133.0 539.0 L145.0 539.0 L150.0 536.0 L165.0 527.0 L182.0 527.0 L196.0 524.0 L225.0 526.0 L248.0 514.0 L265.0 514.0 L281.0 513.5 L297.0 515.5 L318.0 522.0 L325.0 524.0 L334.0 523.5 L350.0 520.0 L360.0 518.5 L375.0 515.5 L385.0 516.5 L395.0 519.5 L410.0 520.5 L430.0 524.5 L439.0 525.2 L448.6 527.4 L456.5 529.2 L465.0 532.5 L476.0 533.0 L487.0 532.0 L499.0 532.0 L510.0 534.0 L518.0 537.0 L527.0 538.5 L545.0 534.0 L565.0 533.0 L590.0 537.0 L605.0 535.0 L640.0 539.0 L660.0 540.0 L672.0 539.6 L690.0 534.0 L720.0 521.0 L750.0 509.0 L760.0 504.6 L770.0 497.0 L790.0 496.5 L805.0 499.0 L820.0 492.0 L840.0 487.3 L870.0 484.5 L880.0 484.7 L892.0 487.0 L897.0 489.0 L912.0 486.5 L927.0 485.5 L935.0 486.0 L950.0 485.0 L958.0 486.0 L972.0 482.0 L981.0 480.0 L990.0 477.7 L995.0 476.0 L1005.0 476.0 L1007.0 478.0 L1012.0 484.0 L1020.0 486.0 L1028.0 478.0 L1035.0 468.0 L1043.0 448.0" stroke="#ffffff" stroke-width="2" fill="none" stroke-linejoin="round"/>
<rect x="165" y="525" width="17" height="12" fill="#ffffff"/><rect x="195" y="522" width="17" height="12" fill="#ffffff"/><rect x="334" y="518" width="17" height="12" fill="#ffffff"/><rect x="673" y="529" width="17" height="13" fill="#ffffff"/><rect x="748" y="495" width="21" height="13" fill="#ffff00"/><rect x="748" y="497" width="21" height="9" fill="#00ff00"/><rect x="825" y="480" width="21" height="12" fill="#ffff00"/><rect x="825" y="482" width="21" height="8" fill="#00ff00"/><rect x="1033" y="448" width="21" height="12" fill="#ffff00"/><rect x="1033" y="450" width="21" height="8" fill="#00ff00"/>
<path d="M3.5 523V538" stroke="#ff00ff" stroke-width="1" stroke-dasharray="1 1"/><path d="M11.5 523V538" stroke="#ff00ff" stroke-width="1" stroke-dasharray="1 1"/><path d="M19.5 525V538" stroke="#ff00ff" stroke-width="1" stroke-dasharray="1 1"/><path d="M26.5 526V538" stroke="#ff00ff" stroke-width="1" stroke-dasharray="1 1"/><path d="M34.5 526V538" stroke="#ff00ff" stroke-width="1" stroke-dasharray="1 1"/><path d="M42.5 522V538" stroke="#ff00ff" stroke-width="1" stroke-dasharray="1 1"/><path d="M50.5 518V538" stroke="#ff00ff" stroke-width="1" stroke-dasharray="1 1"/><path d="M57.5 516V537" stroke="#ff00ff" stroke-width="1" stroke-dasharray="1 1"/><path d="M65.5 517V536" stroke="#ff00ff" stroke-width="1" stroke-dasharray="1 1"/><path d="M73.5 518V535" stroke="#ff00ff" stroke-width="1" stroke-dasharray="1 1"/><path d="M80.5 520V535" stroke="#ff00ff" stroke-width="1" stroke-dasharray="1 1"/><path d="M88.5 522V534" stroke="#ff00ff" stroke-width="1" stroke-dasharray="1 1"/><path d="M96.5 524V534" stroke="#ff00ff" stroke-width="1" stroke-dasharray="1 1"/><path d="M103.5 525V533" stroke="#ff00ff" stroke-width="1" stroke-dasharray="1 1"/><path d="M111.5 529V532" stroke="#ff00ff" stroke-width="1" stroke-dasharray="1 1"/><path d="M127.5 535V536" stroke="#00e000" stroke-width="1" stroke-dasharray="1 1"/><path d="M134.5 534V539" stroke="#00e000" stroke-width="1" stroke-dasharray="1 1"/><path d="M142.5 534V539" stroke="#00e000" stroke-width="1" stroke-dasharray="1 1"/><path d="M150.5 533V536" stroke="#00e000" stroke-width="1" stroke-dasharray="1 1"/><path d="M157.5 532V533" stroke="#00e000" stroke-width="1" stroke-dasharray="1 1"/><path d="M165.5 527V529" stroke="#ff00ff" stroke-width="1" stroke-dasharray="1 1"/><path d="M188.5 526V528" stroke="#ff00ff" stroke-width="1" stroke-dasharray="1 1"/><path d="M196.5 524V528" stroke="#ff00ff" stroke-width="1" stroke-dasharray="1 1"/><path d="M204.5 525V527" stroke="#ff00ff" stroke-width="1" stroke-dasharray="1 1"/><path d="M227.5 525V527" stroke="#ff00ff" stroke-width="1" stroke-dasharray="1 1"/><path d="M234.5 521V527" stroke="#ff00ff" stroke-width="1" stroke-dasharray="1 1"/><path d="M242.5 517V527" stroke="#ff00ff" stroke-width="1" stroke-dasharray="1 1"/><path d="M250.5 514V526" stroke="#ff00ff" stroke-width="1" stroke-dasharray="1 1"/><path d="M257.5 514V525" stroke="#ff00ff" stroke-width="1" stroke-dasharray="1 1"/><path d="M265.5 514V525" stroke="#ff00ff" stroke-width="1" stroke-dasharray="1 1"/><path d="M273.5 514V523" stroke="#ff00ff" stroke-width="1" stroke-dasharray="1 1"/><path d="M281.5 514V523" stroke="#ff00ff" stroke-width="1" stroke-dasharray="1 1"/><path d="M288.5 514V523" stroke="#ff00ff" stroke-width="1" stroke-dasharray="1 1"/><path d="M296.5 515V523" stroke="#ff00ff" stroke-width="1" stroke-dasharray="1 1"/><path d="M304.5 518V523" stroke="#ff00ff" stroke-width="1" stroke-dasharray="1 1"/><path d="M311.5 520V523" stroke="#ff00ff" stroke-width="1" stroke-dasharray="1 1"/><path d="M350.5 520V523" stroke="#ff00ff" stroke-width="1" stroke-dasharray="1 1"/><path d="M357.5 519V523" stroke="#ff00ff" stroke-width="1" stroke-dasharray="1 1"/><path d="M365.5 518V523" stroke="#ff00ff" stroke-width="1" stroke-dasharray="1 1"/><path d="M373.5 516V523" stroke="#ff00ff" stroke-width="1" stroke-dasharray="1 1"/><path d="M381.5 516V523" stroke="#ff00ff" stroke-width="1" stroke-dasharray="1 1"/><path d="M388.5 517V522" stroke="#ff00ff" stroke-width="1" stroke-dasharray="1 1"/><path d="M404.5 520V521" stroke="#00e000" stroke-width="1" stroke-dasharray="1 1"/><path d="M411.5 518V521" stroke="#00e000" stroke-width="1" stroke-dasharray="1 1"/><path d="M419.5 518V522" stroke="#00e000" stroke-width="1" stroke-dasharray="1 1"/><path d="M427.5 518V524" stroke="#00e000" stroke-width="1" stroke-dasharray="1 1"/><path d="M434.5 517V525" stroke="#00e000" stroke-width="1" stroke-dasharray="1 1"/><path d="M442.5 517V526" stroke="#00e000" stroke-width="1" stroke-dasharray="1 1"/><path d="M450.5 518V528" stroke="#00e000" stroke-width="1" stroke-dasharray="1 1"/><path d="M458.5 518V530" stroke="#00e000" stroke-width="1" stroke-dasharray="1 1"/><path d="M465.5 519V532" stroke="#00e000" stroke-width="1" stroke-dasharray="1 1"/><path d="M473.5 521V533" stroke="#00e000" stroke-width="1" stroke-dasharray="1 1"/><path d="M481.5 521V533" stroke="#00e000" stroke-width="1" stroke-dasharray="1 1"/><path d="M488.5 521V532" stroke="#00e000" stroke-width="1" stroke-dasharray="1 1"/><path d="M496.5 521V532" stroke="#00e000" stroke-width="1" stroke-dasharray="1 1"/><path d="M504.5 521V533" stroke="#00e000" stroke-width="1" stroke-dasharray="1 1"/><path d="M511.5 523V534" stroke="#00e000" stroke-width="1" stroke-dasharray="1 1"/><path d="M519.5 526V537" stroke="#00e000" stroke-width="1" stroke-dasharray="1 1"/><path d="M527.5 527V538" stroke="#00e000" stroke-width="1" stroke-dasharray="1 1"/><path d="M535.5 528V536" stroke="#00e000" stroke-width="1" stroke-dasharray="1 1"/><path d="M542.5 528V535" stroke="#00e000" stroke-width="1" stroke-dasharray="1 1"/><path d="M550.5 528V534" stroke="#00e000" stroke-width="1" stroke-dasharray="1 1"/><path d="M558.5 528V533" stroke="#00e000" stroke-width="1" stroke-dasharray="1 1"/><path d="M565.5 528V533" stroke="#00e000" stroke-width="1" stroke-dasharray="1 1"/><path d="M573.5 528V534" stroke="#00e000" stroke-width="1" stroke-dasharray="1 1"/><path d="M581.5 528V536" stroke="#00e000" stroke-width="1" stroke-dasharray="1 1"/><path d="M588.5 528V537" stroke="#00e000" stroke-width="1" stroke-dasharray="1 1"/><path d="M596.5 528V536" stroke="#00e000" stroke-width="1" stroke-dasharray="1 1"/><path d="M604.5 528V535" stroke="#00e000" stroke-width="1" stroke-dasharray="1 1"/><path d="M612.5 528V536" stroke="#00e000" stroke-width="1" stroke-dasharray="1 1"/><path d="M619.5 528V537" stroke="#00e000" stroke-width="1" stroke-dasharray="1 1"/><path d="M627.5 529V538" stroke="#00e000" stroke-width="1" stroke-dasharray="1 1"/><path d="M635.5 530V538" stroke="#00e000" stroke-width="1" stroke-dasharray="1 1"/><path d="M642.5 530V539" stroke="#00e000" stroke-width="1" stroke-dasharray="1 1"/><path d="M650.5 530V540" stroke="#00e000" stroke-width="1" stroke-dasharray="1 1"/><path d="M658.5 533V540" stroke="#00e000" stroke-width="1" stroke-dasharray="1 1"/><path d="M665.5 535V540" stroke="#00e000" stroke-width="1" stroke-dasharray="1 1"/><path d="M673.5 537V539" stroke="#00e000" stroke-width="1" stroke-dasharray="1 1"/><path d="M681.5 537V537" stroke="#00e000" stroke-width="1" stroke-dasharray="1 1"/><path d="M696.5 531V534" stroke="#ff00ff" stroke-width="1" stroke-dasharray="1 1"/><path d="M704.5 528V534" stroke="#ff00ff" stroke-width="1" stroke-dasharray="1 1"/><path d="M712.5 524V533" stroke="#ff00ff" stroke-width="1" stroke-dasharray="1 1"/><path d="M719.5 521V532" stroke="#ff00ff" stroke-width="1" stroke-dasharray="1 1"/><path d="M727.5 518V531" stroke="#ff00ff" stroke-width="1" stroke-dasharray="1 1"/><path d="M735.5 515V529" stroke="#ff00ff" stroke-width="1" stroke-dasharray="1 1"/><path d="M742.5 512V526" stroke="#ff00ff" stroke-width="1" stroke-dasharray="1 1"/><path d="M750.5 509V524" stroke="#ff00ff" stroke-width="1" stroke-dasharray="1 1"/><path d="M758.5 505V521" stroke="#ff00ff" stroke-width="1" stroke-dasharray="1 1"/><path d="M765.5 501V519" stroke="#ff00ff" stroke-width="1" stroke-dasharray="1 1"/><path d="M773.5 497V516" stroke="#ff00ff" stroke-width="1" stroke-dasharray="1 1"/><path d="M781.5 497V515" stroke="#ff00ff" stroke-width="1" stroke-dasharray="1 1"/><path d="M789.5 497V514" stroke="#ff00ff" stroke-width="1" stroke-dasharray="1 1"/><path d="M796.5 498V514" stroke="#ff00ff" stroke-width="1" stroke-dasharray="1 1"/><path d="M804.5 499V514" stroke="#ff00ff" stroke-width="1" stroke-dasharray="1 1"/><path d="M812.5 496V514" stroke="#ff00ff" stroke-width="1" stroke-dasharray="1 1"/><path d="M819.5 492V514" stroke="#ff00ff" stroke-width="1" stroke-dasharray="1 1"/><path d="M827.5 490V514" stroke="#ff00ff" stroke-width="1" stroke-dasharray="1 1"/><path d="M835.5 488V514" stroke="#ff00ff" stroke-width="1" stroke-dasharray="1 1"/><path d="M842.5 487V512" stroke="#ff00ff" stroke-width="1" stroke-dasharray="1 1"/><path d="M850.5 486V509" stroke="#ff00ff" stroke-width="1" stroke-dasharray="1 1"/><path d="M858.5 486V507" stroke="#ff00ff" stroke-width="1" stroke-dasharray="1 1"/><path d="M866.5 485V507" stroke="#ff00ff" stroke-width="1" stroke-dasharray="1 1"/><path d="M873.5 485V507" stroke="#ff00ff" stroke-width="1" stroke-dasharray="1 1"/><path d="M881.5 485V507" stroke="#ff00ff" stroke-width="1" stroke-dasharray="1 1"/><path d="M889.5 486V507" stroke="#ff00ff" stroke-width="1" stroke-dasharray="1 1"/><path d="M896.5 489V505" stroke="#ff00ff" stroke-width="1" stroke-dasharray="1 1"/><path d="M904.5 488V504" stroke="#ff00ff" stroke-width="1" stroke-dasharray="1 1"/><path d="M912.5 486V502" stroke="#ff00ff" stroke-width="1" stroke-dasharray="1 1"/><path d="M919.5 486V501" stroke="#ff00ff" stroke-width="1" stroke-dasharray="1 1"/><path d="M927.5 486V500" stroke="#ff00ff" stroke-width="1" stroke-dasharray="1 1"/><path d="M935.5 486V499" stroke="#ff00ff" stroke-width="1" stroke-dasharray="1 1"/><path d="M942.5 486V498" stroke="#ff00ff" stroke-width="1" stroke-dasharray="1 1"/><path d="M950.5 485V496" stroke="#ff00ff" stroke-width="1" stroke-dasharray="1 1"/><path d="M958.5 486V495" stroke="#ff00ff" stroke-width="1" stroke-dasharray="1 1"/><path d="M966.5 484V493" stroke="#ff00ff" stroke-width="1" stroke-dasharray="1 1"/><path d="M973.5 482V491" stroke="#ff00ff" stroke-width="1" stroke-dasharray="1 1"/><path d="M981.5 480V489" stroke="#ff00ff" stroke-width="1" stroke-dasharray="1 1"/><path d="M989.5 478V487" stroke="#ff00ff" stroke-width="1" stroke-dasharray="1 1"/><path d="M996.5 476V486" stroke="#ff00ff" stroke-width="1" stroke-dasharray="1 1"/><path d="M1004.5 476V486" stroke="#ff00ff" stroke-width="1" stroke-dasharray="1 1"/><path d="M1027.5 479V484" stroke="#ff00ff" stroke-width="1" stroke-dasharray="1 1"/><path d="M1035.5 468V481" stroke="#ff00ff" stroke-width="1" stroke-dasharray="1 1"/><path d="M1043.5 448V477" stroke="#ff00ff" stroke-width="1" stroke-dasharray="1 1"/>
<clipPath id="pane"><rect x="1" y="397" width="1069" height="233"/></clipPath><g clip-path="url(#pane)"><rect x="-2" y="518" width="11" height="4" fill="#00ffff"/><rect x="14" y="522" width="11" height="10" fill="#00ffff"/><rect x="52" y="501" width="11" height="11" fill="#00ffff"/><rect x="60" y="519" width="11" height="1" fill="#00ffff"/><rect x="68" y="519" width="11" height="5" fill="#00ffff"/><rect x="75" y="521" width="11" height="3" fill="#00ffff"/><rect x="98" y="526" width="11" height="6" fill="#00ffff"/><rect x="106" y="533" width="11" height="2" fill="#00ffff"/><rect x="114" y="533" width="11" height="7" fill="#00ffff"/><rect x="122" y="539" width="11" height="4" fill="#00ffff"/><rect x="129" y="543" width="11" height="3" fill="#00ffff"/><rect x="175" y="524" width="11" height="4" fill="#00ffff"/><rect x="183" y="528" width="11" height="3" fill="#00ffff"/><rect x="214" y="521" width="11" height="4" fill="#00ffff"/><rect x="252" y="505" width="11" height="10" fill="#00ffff"/><rect x="276" y="505" width="11" height="8" fill="#00ffff"/><rect x="283" y="511" width="11" height="8" fill="#00ffff"/><rect x="299" y="517" width="11" height="6" fill="#00ffff"/><rect x="314" y="518" width="11" height="6" fill="#00ffff"/><rect x="322" y="523" width="11" height="12" fill="#00ffff"/><rect x="352" y="514" width="11" height="3" fill="#00ffff"/><rect x="368" y="512" width="11" height="2" fill="#00ffff"/><rect x="383" y="517" width="11" height="3" fill="#00ffff"/><rect x="391" y="521" width="11" height="2" fill="#00ffff"/><rect x="399" y="521" width="11" height="1" fill="#00ffff"/><rect x="406" y="521" width="11" height="5" fill="#00ffff"/><rect x="414" y="523" width="11" height="7" fill="#00ffff"/><rect x="437" y="526" width="11" height="4" fill="#00ffff"/><rect x="445" y="528" width="11" height="4" fill="#00ffff"/><rect x="453" y="529" width="11" height="5" fill="#00ffff"/><rect x="460" y="534" width="11" height="3" fill="#00ffff"/><rect x="499" y="530" width="11" height="6" fill="#00ffff"/><rect x="506" y="535" width="11" height="2" fill="#00ffff"/><rect x="514" y="538" width="11" height="9" fill="#00ffff"/><rect x="537" y="537" width="11" height="2" fill="#00ffff"/><rect x="568" y="530" width="11" height="6" fill="#00ffff"/><rect x="576" y="535" width="11" height="3" fill="#00ffff"/><rect x="583" y="537" width="11" height="3" fill="#00ffff"/><rect x="614" y="534" width="11" height="5" fill="#00ffff"/><rect x="630" y="538" width="11" height="2" fill="#00ffff"/><rect x="637" y="540" width="11" height="3" fill="#00ffff"/><rect x="645" y="543" width="11" height="4" fill="#00ffff"/><rect x="760" y="480" width="11" height="14" fill="#00ffff"/><rect x="776" y="492" width="11" height="4" fill="#00ffff"/><rect x="784" y="495" width="11" height="8" fill="#00ffff"/><rect x="837" y="469" width="11" height="11" fill="#00ffff"/><rect x="853" y="470" width="11" height="11" fill="#00ffff"/><rect x="868" y="481" width="11" height="4" fill="#00ffff"/><rect x="876" y="486" width="11" height="9" fill="#00ffff"/><rect x="891" y="491" width="11" height="4" fill="#00ffff"/><rect x="907" y="479" width="11" height="6" fill="#00ffff"/><rect x="914" y="485" width="11" height="3" fill="#00ffff"/><rect x="937" y="482" width="11" height="4" fill="#00ffff"/><rect x="945" y="485" width="11" height="2" fill="#00ffff"/><rect x="953" y="486" width="11" height="2" fill="#00ffff"/><rect x="976" y="476" width="11" height="3" fill="#00ffff"/><rect x="1007" y="474" width="11" height="18" fill="#00ffff"/><rect x="1014" y="494" width="11" height="2" fill="#00ffff"/><rect x="6" y="521" width="11" height="2" fill="#ff0000"/><rect x="21" y="529" width="11" height="5" fill="#ff0000"/><rect x="29" y="526" width="11" height="4" fill="#ff0000"/><rect x="37" y="523" width="11" height="5" fill="#ff0000"/><rect x="45" y="500" width="11" height="23" fill="#ff0000"/><rect x="91" y="526" width="11" height="2" fill="#ff0000"/><rect x="137" y="540" width="11" height="7" fill="#ff0000"/><rect x="145" y="538" width="11" height="3" fill="#ff0000"/><rect x="152" y="528" width="11" height="10" fill="#ff0000"/><rect x="160" y="527" width="11" height="2" fill="#ff0000"/><rect x="168" y="522" width="11" height="7" fill="#ff0000"/><rect x="191" y="529" width="11" height="1" fill="#ff0000"/><rect x="199" y="524" width="11" height="5" fill="#ff0000"/><rect x="206" y="519" width="11" height="7" fill="#ff0000"/><rect x="222" y="523" width="11" height="2" fill="#ff0000"/><rect x="229" y="517" width="11" height="7" fill="#ff0000"/><rect x="237" y="511" width="11" height="9" fill="#ff0000"/><rect x="245" y="504" width="11" height="7" fill="#ff0000"/><rect x="268" y="506" width="11" height="9" fill="#ff0000"/><rect x="291" y="517" width="11" height="16" fill="#ff0000"/><rect x="306" y="516" width="11" height="6" fill="#ff0000"/><rect x="329" y="529" width="11" height="3" fill="#ff0000"/><rect x="337" y="517" width="11" height="11" fill="#ff0000"/><rect x="345" y="514" width="11" height="4" fill="#ff0000"/><rect x="360" y="511" width="11" height="6" fill="#ff0000"/><rect x="422" y="527" width="11" height="4" fill="#ff0000"/><rect x="429" y="526" width="11" height="2" fill="#ff0000"/><rect x="468" y="536" width="11" height="2" fill="#ff0000"/><rect x="476" y="531" width="11" height="7" fill="#ff0000"/><rect x="483" y="531" width="11" height="1" fill="#ff0000"/><rect x="522" y="541" width="11" height="3" fill="#ff0000"/><rect x="530" y="537" width="11" height="3" fill="#ff0000"/><rect x="545" y="535" width="11" height="3" fill="#ff0000"/><rect x="553" y="532" width="11" height="6" fill="#ff0000"/><rect x="560" y="530" width="11" height="1" fill="#ff0000"/><rect x="591" y="539" width="11" height="3" fill="#ff0000"/><rect x="599" y="533" width="11" height="7" fill="#ff0000"/><rect x="607" y="533" width="11" height="1" fill="#ff0000"/><rect x="622" y="537" width="11" height="2" fill="#ff0000"/><rect x="653" y="542" width="11" height="6" fill="#ff0000"/><rect x="660" y="535" width="11" height="3" fill="#ff0000"/><rect x="676" y="530" width="11" height="3" fill="#ff0000"/><rect x="683" y="529" width="11" height="4" fill="#ff0000"/><rect x="691" y="525" width="11" height="8" fill="#ff0000"/><rect x="699" y="522" width="11" height="4" fill="#ff0000"/><rect x="707" y="519" width="11" height="4" fill="#ff0000"/><rect x="714" y="518" width="11" height="2" fill="#ff0000"/><rect x="722" y="513" width="11" height="7" fill="#ff0000"/><rect x="730" y="511" width="11" height="2" fill="#ff0000"/><rect x="737" y="508" width="11" height="4" fill="#ff0000"/><rect x="745" y="501" width="11" height="7" fill="#ff0000"/><rect x="753" y="480" width="11" height="18" fill="#ff0000"/><rect x="768" y="492" width="11" height="3" fill="#ff0000"/><rect x="791" y="498" width="11" height="5" fill="#ff0000"/><rect x="799" y="500" width="11" height="3" fill="#ff0000"/><rect x="807" y="489" width="11" height="10" fill="#ff0000"/><rect x="814" y="482" width="11" height="5" fill="#ff0000"/><rect x="822" y="482" width="11" height="5" fill="#ff0000"/><rect x="830" y="474" width="11" height="12" fill="#ff0000"/><rect x="845" y="470" width="11" height="11" fill="#ff0000"/><rect x="861" y="476" width="11" height="3" fill="#ff0000"/><rect x="884" y="488" width="11" height="7" fill="#ff0000"/><rect x="899" y="478" width="11" height="14" fill="#ff0000"/><rect x="922" y="486" width="11" height="6" fill="#ff0000"/><rect x="930" y="482" width="11" height="2" fill="#ff0000"/><rect x="961" y="482" width="11" height="7" fill="#ff0000"/><rect x="968" y="477" width="11" height="3" fill="#ff0000"/><rect x="984" y="473" width="11" height="4" fill="#ff0000"/><rect x="991" y="472" width="11" height="4" fill="#ff0000"/><rect x="1022" y="463" width="11" height="22" fill="#ff0000"/><rect x="1030" y="434" width="11" height="33" fill="#ff0000"/><rect x="1038" y="416" width="11" height="28" fill="#ff0000"/></g>
<rect x="0" y="19" width="1121" height="1" fill="#900000"/><rect x="1" y="0" width="1" height="19" fill="#900000"/><rect x="23" y="0" width="1" height="19" fill="#900000"/><rect x="805" y="0" width="1" height="19" fill="#900000"/><rect x="839" y="0" width="1" height="19" fill="#900000"/><rect x="874" y="0" width="1" height="19" fill="#900000"/><rect x="909" y="0" width="1" height="19" fill="#900000"/><rect x="944" y="0" width="1" height="19" fill="#900000"/><rect x="979" y="0" width="1" height="19" fill="#900000"/><rect x="1014" y="0" width="1" height="19" fill="#900000"/><rect x="1049" y="0" width="1" height="19" fill="#900000"/><rect x="1084" y="0" width="1" height="19" fill="#900000"/><rect x="1121" y="0" width="1" height="600" fill="#900000"/><rect x="1120" y="397" width="1" height="203" fill="#900000"/><rect x="1070" y="20" width="1" height="611" fill="#900000"/><rect x="1071" y="397" width="1" height="234" fill="#900000"/><rect x="0" y="396" width="1121" height="1" fill="#900000"/><rect x="0" y="630" width="1121" height="1" fill="#900000"/><rect x="0" y="646" width="1130" height="1" fill="#900000"/><rect x="1071" y="50" width="5" height="1" fill="#900000"/><rect x="1071" y="86" width="5" height="1" fill="#900000"/><rect x="1071" y="122" width="5" height="1" fill="#900000"/><rect x="1071" y="159" width="5" height="1" fill="#900000"/><rect x="1071" y="195" width="5" height="1" fill="#900000"/><rect x="1071" y="231" width="5" height="1" fill="#900000"/><rect x="1071" y="268" width="5" height="1" fill="#900000"/><rect x="1071" y="304" width="5" height="1" fill="#900000"/><rect x="1071" y="340" width="5" height="1" fill="#900000"/><rect x="1071" y="377" width="5" height="1" fill="#900000"/><rect x="1071" y="68" width="2" height="1" fill="#900000"/><rect x="1071" y="104" width="2" height="1" fill="#900000"/><rect x="1071" y="140" width="2" height="1" fill="#900000"/><rect x="1071" y="177" width="2" height="1" fill="#900000"/><rect x="1071" y="213" width="2" height="1" fill="#900000"/><rect x="1071" y="249" width="2" height="1" fill="#900000"/><rect x="1071" y="286" width="2" height="1" fill="#900000"/><rect x="1071" y="322" width="2" height="1" fill="#900000"/><rect x="1071" y="358" width="2" height="1" fill="#900000"/><rect x="1072" y="433" width="5" height="1" fill="#900000"/><rect x="1072" y="469" width="5" height="1" fill="#900000"/><rect x="1072" y="505" width="5" height="1" fill="#900000"/><rect x="1072" y="541" width="5" height="1" fill="#900000"/><rect x="1072" y="577" width="5" height="1" fill="#900000"/><rect x="1072" y="613" width="5" height="1" fill="#900000"/><rect x="1072" y="451" width="2" height="1" fill="#900000"/><rect x="1072" y="487" width="2" height="1" fill="#900000"/><rect x="1072" y="523" width="2" height="1" fill="#900000"/><rect x="1072" y="559" width="2" height="1" fill="#900000"/><rect x="1072" y="595" width="2" height="1" fill="#900000"/>
<rect x="5.5" y="4.5" width="11" height="9" rx="2" fill="none" stroke="#8a8a8a" stroke-width="1.3"/><rect x="11" y="6" width="4" height="6" fill="#8a8a8a"/><text x="28" y="13.5" fill="#f0f0f0" font-size="12" text-anchor="start" font-weight="normal" font-family="'Liberation Sans', sans-serif" textLength="23" lengthAdjust="spacingAndGlyphs">分时</text><text x="62" y="13.5" fill="#f0f0f0" font-size="12" text-anchor="start" font-weight="normal" font-family="'Liberation Sans', sans-serif" textLength="29" lengthAdjust="spacingAndGlyphs">1分钟</text><text x="100" y="13.5" fill="#f0f0f0" font-size="12" text-anchor="start" font-weight="normal" font-family="'Liberation Sans', sans-serif" textLength="30" lengthAdjust="spacingAndGlyphs">5分钟</text><text x="139" y="13.5" fill="#f0f0f0" font-size="12" text-anchor="start" font-weight="normal" font-family="'Liberation Sans', sans-serif" textLength="38" lengthAdjust="spacingAndGlyphs">15分钟</text><text x="185" y="13.5" fill="#f0f0f0" font-size="12" text-anchor="start" font-weight="normal" font-family="'Liberation Sans', sans-serif" textLength="37" lengthAdjust="spacingAndGlyphs">30分钟</text><text x="231" y="13.5" fill="#f0f0f0" font-size="12" text-anchor="start" font-weight="normal" font-family="'Liberation Sans', sans-serif" textLength="37" lengthAdjust="spacingAndGlyphs">60分钟</text><text x="278" y="13.5" fill="#00e0e0" font-size="12" text-anchor="start" font-weight="normal" font-family="'Liberation Sans', sans-serif" textLength="24" lengthAdjust="spacingAndGlyphs">日线</text><text x="312" y="13.5" fill="#f0f0f0" font-size="12" text-anchor="start" font-weight="normal" font-family="'Liberation Sans', sans-serif" textLength="24" lengthAdjust="spacingAndGlyphs">周线</text><text x="346" y="13.5" fill="#f0f0f0" font-size="12" text-anchor="start" font-weight="normal" font-family="'Liberation Sans', sans-serif" textLength="24" lengthAdjust="spacingAndGlyphs">月线</text><text x="378" y="13.5" fill="#f0f0f0" font-size="12" text-anchor="start" font-weight="normal" font-family="'Liberation Sans', sans-serif" textLength="36" lengthAdjust="spacingAndGlyphs">多周期</text><text x="422" y="13.5" fill="#f0f0f0" font-size="12" text-anchor="start" font-weight="normal" font-family="'Liberation Sans', sans-serif" textLength="24" lengthAdjust="spacingAndGlyphs">更多</text><path d="M450.5 5.5 L455 10 L450.5 14.5" stroke="#e6e6e6" stroke-width="1.2" fill="none"/><text x="811" y="13.5" fill="#f0f0f0" font-size="12" text-anchor="start" font-weight="normal" font-family="'Liberation Sans', sans-serif" textLength="23" lengthAdjust="spacingAndGlyphs">复权</text><text x="845" y="13.5" fill="#f0f0f0" font-size="12" text-anchor="start" font-weight="normal" font-family="'Liberation Sans', sans-serif" textLength="24" lengthAdjust="spacingAndGlyphs">叠加</text><text x="879" y="13.5" fill="#f0f0f0" font-size="12" text-anchor="start" font-weight="normal" font-family="'Liberation Sans', sans-serif" textLength="24" lengthAdjust="spacingAndGlyphs">多股</text><text x="914" y="13.5" fill="#f0f0f0" font-size="12" text-anchor="start" font-weight="normal" font-family="'Liberation Sans', sans-serif" textLength="23.5" lengthAdjust="spacingAndGlyphs">统计</text><text x="949" y="13.5" fill="#f0f0f0" font-size="12" text-anchor="start" font-weight="normal" font-family="'Liberation Sans', sans-serif" textLength="23.5" lengthAdjust="spacingAndGlyphs">画线</text><text x="987.5" y="13.5" fill="#f0f0f0" font-size="12" text-anchor="start" font-weight="normal" font-family="'Liberation Sans', sans-serif" textLength="20" lengthAdjust="spacingAndGlyphs">F10</text><text x="1019" y="13.5" fill="#f0f0f0" font-size="12" text-anchor="start" font-weight="normal" font-family="'Liberation Sans', sans-serif" textLength="23.5" lengthAdjust="spacingAndGlyphs">标记</text><text x="1052.5" y="13.5" fill="#f0f0f0" font-size="12" text-anchor="start" font-weight="normal" font-family="'Liberation Sans', sans-serif" textLength="30" lengthAdjust="spacingAndGlyphs">+自选</text><text x="1090" y="13.5" fill="#f0f0f0" font-size="12" text-anchor="start" font-weight="normal" font-family="'Liberation Sans', sans-serif" textLength="24" lengthAdjust="spacingAndGlyphs">返回</text><text x="2.5" y="33.5" fill="#f0f0f0" font-size="12" text-anchor="start" font-weight="normal" font-family="'Liberation Sans', sans-serif" textLength="108" lengthAdjust="spacingAndGlyphs">深科达(日线.前复权)</text><circle cx="122" cy="29" r="6" fill="#7a7a7a" shape-rendering="auto"/><path d="M119 27.5 L122 30.5 L125 27.5" stroke="#1a1a1a" stroke-width="1.3" fill="none" shape-rendering="auto"/><path d="M1042.5 24 L1048 29.5 L1042.5 35 L1037 29.5 Z" stroke="#9a9a9a" stroke-width="1" fill="none" shape-rendering="auto"/><rect x="1055.5" y="24.5" width="11" height="10" rx="2" fill="none" stroke="#9a9a9a" stroke-width="1.3" shape-rendering="auto"/><rect x="1062" y="26" width="3" height="7" fill="#9a9a9a"/><text x="1115" y="54.5" fill="#d40000" font-size="12" text-anchor="end" font-weight="normal" font-family="'Liberation Sans', sans-serif" textLength="29.5" lengthAdjust="spacingAndGlyphs">42.00</text><text x="1115" y="90.5" fill="#d40000" font-size="12" text-anchor="end" font-weight="normal" font-family="'Liberation Sans', sans-serif" textLength="29.5" lengthAdjust="spacingAndGlyphs">40.00</text><text x="1115" y="126.5" fill="#d40000" font-size="12" text-anchor="end" font-weight="normal" font-family="'Liberation Sans', sans-serif" textLength="29.5" lengthAdjust="spacingAndGlyphs">38.00</text><text x="1115" y="163.5" fill="#d40000" font-size="12" text-anchor="end" font-weight="normal" font-family="'Liberation Sans', sans-serif" textLength="29.5" lengthAdjust="spacingAndGlyphs">36.00</text><text x="1115" y="199.5" fill="#d40000" font-size="12" text-anchor="end" font-weight="normal" font-family="'Liberation Sans', sans-serif" textLength="29.5" lengthAdjust="spacingAndGlyphs">34.00</text><text x="1115" y="235.5" fill="#d40000" font-size="12" text-anchor="end" font-weight="normal" font-family="'Liberation Sans', sans-serif" textLength="29.5" lengthAdjust="spacingAndGlyphs">32.00</text><text x="1115" y="272.5" fill="#d40000" font-size="12" text-anchor="end" font-weight="normal" font-family="'Liberation Sans', sans-serif" textLength="29.5" lengthAdjust="spacingAndGlyphs">30.00</text><text x="1115" y="308.5" fill="#d40000" font-size="12" text-anchor="end" font-weight="normal" font-family="'Liberation Sans', sans-serif" textLength="29.5" lengthAdjust="spacingAndGlyphs">28.00</text><text x="1115" y="344.5" fill="#d40000" font-size="12" text-anchor="end" font-weight="normal" font-family="'Liberation Sans', sans-serif" textLength="29.5" lengthAdjust="spacingAndGlyphs">26.00</text><text x="1115" y="381.5" fill="#d40000" font-size="12" text-anchor="end" font-weight="normal" font-family="'Liberation Sans', sans-serif" textLength="29.5" lengthAdjust="spacingAndGlyphs">24.00</text><text x="1115" y="437.5" fill="#d40000" font-size="12" text-anchor="end" font-weight="normal" font-family="'Liberation Sans', sans-serif" textLength="29.5" lengthAdjust="spacingAndGlyphs">40.00</text><text x="1115" y="473.5" fill="#d40000" font-size="12" text-anchor="end" font-weight="normal" font-family="'Liberation Sans', sans-serif" textLength="29.5" lengthAdjust="spacingAndGlyphs">35.00</text><text x="1115" y="509.5" fill="#d40000" font-size="12" text-anchor="end" font-weight="normal" font-family="'Liberation Sans', sans-serif" textLength="29.5" lengthAdjust="spacingAndGlyphs">30.00</text><text x="1115" y="545.5" fill="#d40000" font-size="12" text-anchor="end" font-weight="normal" font-family="'Liberation Sans', sans-serif" textLength="29.5" lengthAdjust="spacingAndGlyphs">25.00</text><text x="1115" y="581.5" fill="#d40000" font-size="12" text-anchor="end" font-weight="normal" font-family="'Liberation Sans', sans-serif" textLength="29.5" lengthAdjust="spacingAndGlyphs">20.00</text><rect x="1071" y="490" width="50" height="17" fill="#900000"/><rect x="1071" y="491" width="49" height="15" fill="#3a0a88"/><text x="1072" y="501.5" fill="#ffffff" font-size="12" text-anchor="start" font-weight="normal" font-family="'Liberation Sans', sans-serif" textLength="29.5" lengthAdjust="spacingAndGlyphs">29.85</text><circle cx="8" cy="405.5" r="6" fill="#7a7a7a" shape-rendering="auto"/><path d="M5 404 L8 407 L11 404" stroke="#1a1a1a" stroke-width="1.3" fill="none" shape-rendering="auto"/><text x="18.4" y="410" fill="#f0f0f0" font-size="12" text-anchor="start" font-weight="normal" font-family="'Liberation Sans', sans-serif" textLength="58.8" lengthAdjust="spacingAndGlyphs">股朋指标网</text><text x="83.2" y="410" fill="#00ff00" font-size="12" text-anchor="start" font-weight="normal" font-family="'Liberation Sans', sans-serif" textLength="60.2" lengthAdjust="spacingAndGlyphs">箱底: 30.49</text><text x="148.7" y="410" fill="#ffff00" font-size="12" text-anchor="start" font-weight="normal" font-family="'Liberation Sans', sans-serif" textLength="72.5" lengthAdjust="spacingAndGlyphs">长箱底: 24.57</text><text x="226.5" y="410" fill="#00ffff" font-size="12" text-anchor="start" font-weight="normal" font-family="'Liberation Sans', sans-serif" textLength="85" lengthAdjust="spacingAndGlyphs">长长箱底: 24.57</text><text x="316.8" y="410" fill="#00ff00" font-size="12" text-anchor="start" font-weight="normal" font-family="'Liberation Sans', sans-serif" textLength="84.4" lengthAdjust="spacingAndGlyphs">长长箱顶: 37.09</text><text x="407.6" y="410" fill="#ff2828" font-size="12" text-anchor="start" font-weight="normal" font-family="'Liberation Sans', sans-serif" textLength="71.5" lengthAdjust="spacingAndGlyphs">长箱顶: 37.09</text><text x="484.4" y="410" fill="#f5a500" font-size="12" text-anchor="start" font-weight="normal" font-family="'Liberation Sans', sans-serif" textLength="61.3" lengthAdjust="spacingAndGlyphs">箱顶: 37.09</text><text x="551.7" y="410" fill="#ff00ff" font-size="12" text-anchor="start" font-weight="normal" font-family="'Liberation Sans', sans-serif" textLength="60.2" lengthAdjust="spacingAndGlyphs">中间: 33.79</text><text x="616.5" y="410" fill="#00ff00" font-size="12" text-anchor="start" font-weight="normal" font-family="'Liberation Sans', sans-serif" textLength="67.9" lengthAdjust="spacingAndGlyphs">启动线: 40.86</text><text x="694.3" y="410" fill="#f0f0f0" font-size="12" text-anchor="start" font-weight="normal" font-family="'Liberation Sans', sans-serif" textLength="53.8" lengthAdjust="spacingAndGlyphs">WX: 37.91</text><rect x="568" y="632" width="80" height="13" fill="#3c0a8c"/><text x="4" y="644" fill="#d40000" font-size="12" text-anchor="start" font-weight="normal" font-family="'Liberation Sans', sans-serif" textLength="38" lengthAdjust="spacingAndGlyphs">2025年</text><text x="112" y="644" fill="#d40000" font-size="12" text-anchor="start" font-weight="normal" font-family="'Liberation Sans', sans-serif">9</text><text x="281" y="643.5" fill="#d40000" font-size="12" text-anchor="start" font-weight="normal" font-family="'Liberation Sans', sans-serif">10</text><text x="412" y="644" fill="#d40000" font-size="12" text-anchor="start" font-weight="normal" font-family="'Liberation Sans', sans-serif">11</text><text x="569" y="643.5" fill="#e6e6e6" font-size="12" text-anchor="start" font-weight="normal" font-family="'Liberation Sans', sans-serif" textLength="78" lengthAdjust="spacingAndGlyphs">2025/12/02/二</text><text x="743" y="643.5" fill="#d40000" font-size="12" text-anchor="start" font-weight="normal" font-family="'Liberation Sans', sans-serif">1</text><text x="898" y="644" fill="#d40000" font-size="12" text-anchor="start" font-weight="normal" font-family="'Liberation Sans', sans-serif">2</text><rect x="110" y="631" width="1" height="15" fill="#900000"/><rect x="279" y="631" width="1" height="15" fill="#900000"/><rect x="410" y="631" width="1" height="15" fill="#900000"/><rect x="566" y="631" width="1" height="15" fill="#900000"/><rect x="741" y="631" width="1" height="15" fill="#900000"/><rect x="896" y="631" width="1" height="15" fill="#900000"/><rect x="152" y="631" width="1" height="3" fill="#900000"/><rect x="196" y="631" width="1" height="3" fill="#900000"/><rect x="238" y="631" width="1" height="3" fill="#900000"/><rect x="313" y="631" width="1" height="3" fill="#900000"/><rect x="345" y="631" width="1" height="3" fill="#900000"/><rect x="378" y="631" width="1" height="3" fill="#900000"/><rect x="450" y="631" width="1" height="3" fill="#900000"/><rect x="488" y="631" width="1" height="3" fill="#900000"/><rect x="527" y="631" width="1" height="3" fill="#900000"/><rect x="654" y="631" width="1" height="3" fill="#900000"/><rect x="698" y="631" width="1" height="3" fill="#900000"/><rect x="780" y="631" width="1" height="3" fill="#900000"/><rect x="818" y="631" width="1" height="3" fill="#900000"/><rect x="857" y="631" width="1" height="3" fill="#900000"/><rect x="922" y="631" width="1" height="3" fill="#900000"/><rect x="949" y="631" width="1" height="3" fill="#900000"/><rect x="0" y="647" width="1" height="3" fill="#900000"/><rect x="42" y="647" width="1" height="3" fill="#900000"/><rect x="73" y="647" width="1" height="3" fill="#900000"/><rect x="115" y="647" width="1" height="3" fill="#900000"/><rect x="145" y="647" width="1" height="3" fill="#900000"/><rect x="177" y="647" width="1" height="3" fill="#900000"/><rect x="208" y="647" width="1" height="3" fill="#900000"/><rect x="242" y="647" width="1" height="3" fill="#900000"/><rect x="282" y="647" width="1" height="3" fill="#900000"/><rect x="309" y="647" width="1" height="3" fill="#900000"/><rect x="333" y="647" width="1" height="3" fill="#900000"/><rect x="364" y="647" width="1" height="3" fill="#900000"/><rect x="391" y="647" width="1" height="3" fill="#900000"/><rect x="422" y="647" width="1" height="3" fill="#900000"/><rect x="481" y="647" width="1" height="3" fill="#900000"/><rect x="508" y="647" width="1" height="3" fill="#900000"/><rect x="536" y="647" width="1" height="3" fill="#900000"/><rect x="568" y="647" width="1" height="3" fill="#900000"/><rect x="600" y="647" width="1" height="3" fill="#900000"/><rect x="663" y="647" width="1" height="3" fill="#900000"/><rect x="695" y="647" width="1" height="3" fill="#900000"/><rect x="736" y="647" width="1" height="3" fill="#900000"/><rect x="765" y="647" width="1" height="3" fill="#900000"/><rect x="807" y="647" width="1" height="3" fill="#900000"/><rect x="839" y="647" width="1" height="3" fill="#900000"/><rect x="871" y="647" width="1" height="3" fill="#900000"/><rect x="905" y="647" width="1" height="3" fill="#900000"/><rect x="940" y="647" width="1" height="3" fill="#900000"/><rect x="8" y="649" width="1" height="1" fill="#ffffff"/><rect x="12" y="649" width="2" height="1" fill="#ffffff"/><rect x="20" y="649" width="1" height="1" fill="#ffffff"/><rect x="51" y="649" width="1" height="1" fill="#ffffff"/><rect x="828" y="649" width="1" height="1" fill="#ffffff"/><rect x="845" y="649" width="1" height="1" fill="#00ffff"/><rect x="849" y="649" width="4" height="1" fill="#00ffff"/><rect x="857" y="649" width="9" height="1" fill="#00ffff"/><clipPath id="strip"><rect x="1122" y="20" width="8" height="580"/></clipPath><g clip-path="url(#strip)"><text x="1122" y="39.5" fill="#e8e8e8" font-size="12" text-anchor="start" font-weight="normal" font-family="'Liberation Sans', sans-serif">委</text><text x="1122" y="57.5" fill="#e8e8e8" font-size="12" text-anchor="start" font-weight="normal" font-family="'Liberation Sans', sans-serif">买</text><text x="1122" y="69.5" fill="#e8e8e8" font-size="12" text-anchor="start" font-weight="normal" font-family="'Liberation Sans', sans-serif">买</text><text x="1122" y="81.5" fill="#e8e8e8" font-size="12" text-anchor="start" font-weight="normal" font-family="'Liberation Sans', sans-serif">买</text><text x="1122" y="93.5" fill="#e8e8e8" font-size="12" text-anchor="start" font-weight="normal" font-family="'Liberation Sans', sans-serif">买</text><text x="1122" y="105.5" fill="#e8e8e8" font-size="12" text-anchor="start" font-weight="normal" font-family="'Liberation Sans', sans-serif">买</text><text x="1122" y="117.5" fill="#e8e8e8" font-size="12" text-anchor="start" font-weight="normal" font-family="'Liberation Sans', sans-serif">买</text><text x="1122" y="129.5" fill="#e8e8e8" font-size="12" text-anchor="start" font-weight="normal" font-family="'Liberation Sans', sans-serif">买</text><text x="1122" y="141.5" fill="#e8e8e8" font-size="12" text-anchor="start" font-weight="normal" font-family="'Liberation Sans', sans-serif">买</text><text x="1122" y="154.5" fill="#e8e8e8" font-size="12" text-anchor="start" font-weight="normal" font-family="'Liberation Sans', sans-serif">卖</text><text x="1122" y="166.5" fill="#e8e8e8" font-size="12" text-anchor="start" font-weight="normal" font-family="'Liberation Sans', sans-serif">卖</text><text x="1122" y="178.5" fill="#e8e8e8" font-size="12" text-anchor="start" font-weight="normal" font-family="'Liberation Sans', sans-serif">卖</text><text x="1122" y="190.5" fill="#e8e8e8" font-size="12" text-anchor="start" font-weight="normal" font-family="'Liberation Sans', sans-serif">卖</text><text x="1122" y="202.5" fill="#e8e8e8" font-size="12" text-anchor="start" font-weight="normal" font-family="'Liberation Sans', sans-serif">卖</text><text x="1122" y="214.5" fill="#e8e8e8" font-size="12" text-anchor="start" font-weight="normal" font-family="'Liberation Sans', sans-serif">卖</text><text x="1122" y="226.5" fill="#e8e8e8" font-size="12" text-anchor="start" font-weight="normal" font-family="'Liberation Sans', sans-serif">卖</text><text x="1122" y="238.5" fill="#e8e8e8" font-size="12" text-anchor="start" font-weight="normal" font-family="'Liberation Sans', sans-serif">卖</text><text x="1122" y="252.5" fill="#e8e8e8" font-size="12" text-anchor="start" font-weight="normal" font-family="'Liberation Sans', sans-serif">开</text><text x="1122" y="264.5" fill="#e8e8e8" font-size="12" text-anchor="start" font-weight="normal" font-family="'Liberation Sans', sans-serif">涨</text><text x="1122" y="276.5" fill="#e8e8e8" font-size="12" text-anchor="start" font-weight="normal" font-family="'Liberation Sans', sans-serif">涨</text><text x="1122" y="288.5" fill="#e8e8e8" font-size="12" text-anchor="start" font-weight="normal" font-family="'Liberation Sans', sans-serif">涨</text><text x="1122" y="300.5" fill="#e8e8e8" font-size="12" text-anchor="start" font-weight="normal" font-family="'Liberation Sans', sans-serif">部</text><text x="1122" y="312.5" fill="#e8e8e8" font-size="12" text-anchor="start" font-weight="normal" font-family="'Liberation Sans', sans-serif">外</text><text x="1122" y="324.5" fill="#e8e8e8" font-size="12" text-anchor="start" font-weight="normal" font-family="'Liberation Sans', sans-serif">外</text><text x="1122" y="336.5" fill="#e8e8e8" font-size="12" text-anchor="start" font-weight="normal" font-family="'Liberation Sans', sans-serif">外</text><text x="1122" y="348.5" fill="#e8e8e8" font-size="12" text-anchor="start" font-weight="normal" font-family="'Liberation Sans', sans-serif">换</text><text x="1122" y="360.5" fill="#e8e8e8" font-size="12" text-anchor="start" font-weight="normal" font-family="'Liberation Sans', sans-serif">换</text><text x="1122" y="372.5" fill="#e8e8e8" font-size="12" text-anchor="start" font-weight="normal" font-family="'Liberation Sans', sans-serif">净</text><text x="1122" y="384.5" fill="#e8e8e8" font-size="12" text-anchor="start" font-weight="normal" font-family="'Liberation Sans', sans-serif">净</text><text x="1122" y="396.5" fill="#e8e8e8" font-size="12" text-anchor="start" font-weight="normal" font-family="'Liberation Sans', sans-serif">收</text><text x="1123" y="411" fill="#e6e600" font-size="13" text-anchor="start" font-weight="normal" font-family="'Liberation Sans', sans-serif">自</text><text x="1123" y="431" fill="#f0f0f0" font-size="13" text-anchor="start" font-weight="normal" font-family="'Liberation Sans', sans-serif">泣</text><text x="1123" y="451" fill="#f0f0f0" font-size="13" text-anchor="start" font-weight="normal" font-family="'Liberation Sans', sans-serif">交</text><text x="1123" y="472" fill="#f0f0f0" font-size="13" text-anchor="start" font-weight="normal" font-family="'Liberation Sans', sans-serif">1</text><text x="1123" y="490" fill="#f0f0f0" font-size="13" text-anchor="start" font-weight="normal" font-family="'Liberation Sans', sans-serif">1</text><text x="1123" y="508" fill="#f0f0f0" font-size="13" text-anchor="start" font-weight="normal" font-family="'Liberation Sans', sans-serif">1</text><text x="1123" y="526" fill="#f0f0f0" font-size="13" text-anchor="start" font-weight="normal" font-family="'Liberation Sans', sans-serif">1</text><text x="1123" y="544" fill="#f0f0f0" font-size="13" text-anchor="start" font-weight="normal" font-family="'Liberation Sans', sans-serif">1</text><text x="1123" y="562" fill="#f0f0f0" font-size="13" text-anchor="start" font-weight="normal" font-family="'Liberation Sans', sans-serif">1</text><text x="1123" y="580" fill="#f0f0f0" font-size="13" text-anchor="start" font-weight="normal" font-family="'Liberation Sans', sans-serif">1</text><text x="1123" y="598" fill="#f0f0f0" font-size="13" text-anchor="start" font-weight="normal" font-family="'Liberation Sans', sans-serif">1</text></g><rect x="1122" y="25" width="8" height="1" fill="#900000"/><rect x="1122" y="45" width="8" height="1" fill="#900000"/><rect x="1122" y="142" width="8" height="1" fill="#900000"/><rect x="1122" y="240" width="8" height="1" fill="#900000"/><rect x="1122" y="336" width="8" height="1" fill="#900000"/><rect x="1122" y="417" width="8" height="1" fill="#900000"/><rect x="1122" y="436" width="8" height="1" fill="#900000"/><rect x="1122" y="457" width="8" height="1" fill="#900000"/><rect x="971" y="600" width="159" height="50" fill="#3d3737"/><text x="1050.5" y="621" fill="#ffffff" font-size="18" text-anchor="middle" font-weight="bold" font-family="'Liberation Sans', sans-serif" textLength="89" lengthAdjust="spacingAndGlyphs">指标公式网</text><text x="1053" y="641" fill="#ffffff" font-size="16" text-anchor="middle" font-weight="normal" font-family="'Liberation Sans', sans-serif" textLength="117" lengthAdjust="spacingAndGlyphs">www.zbgs3.com</text>
</svg>
</body></html>
